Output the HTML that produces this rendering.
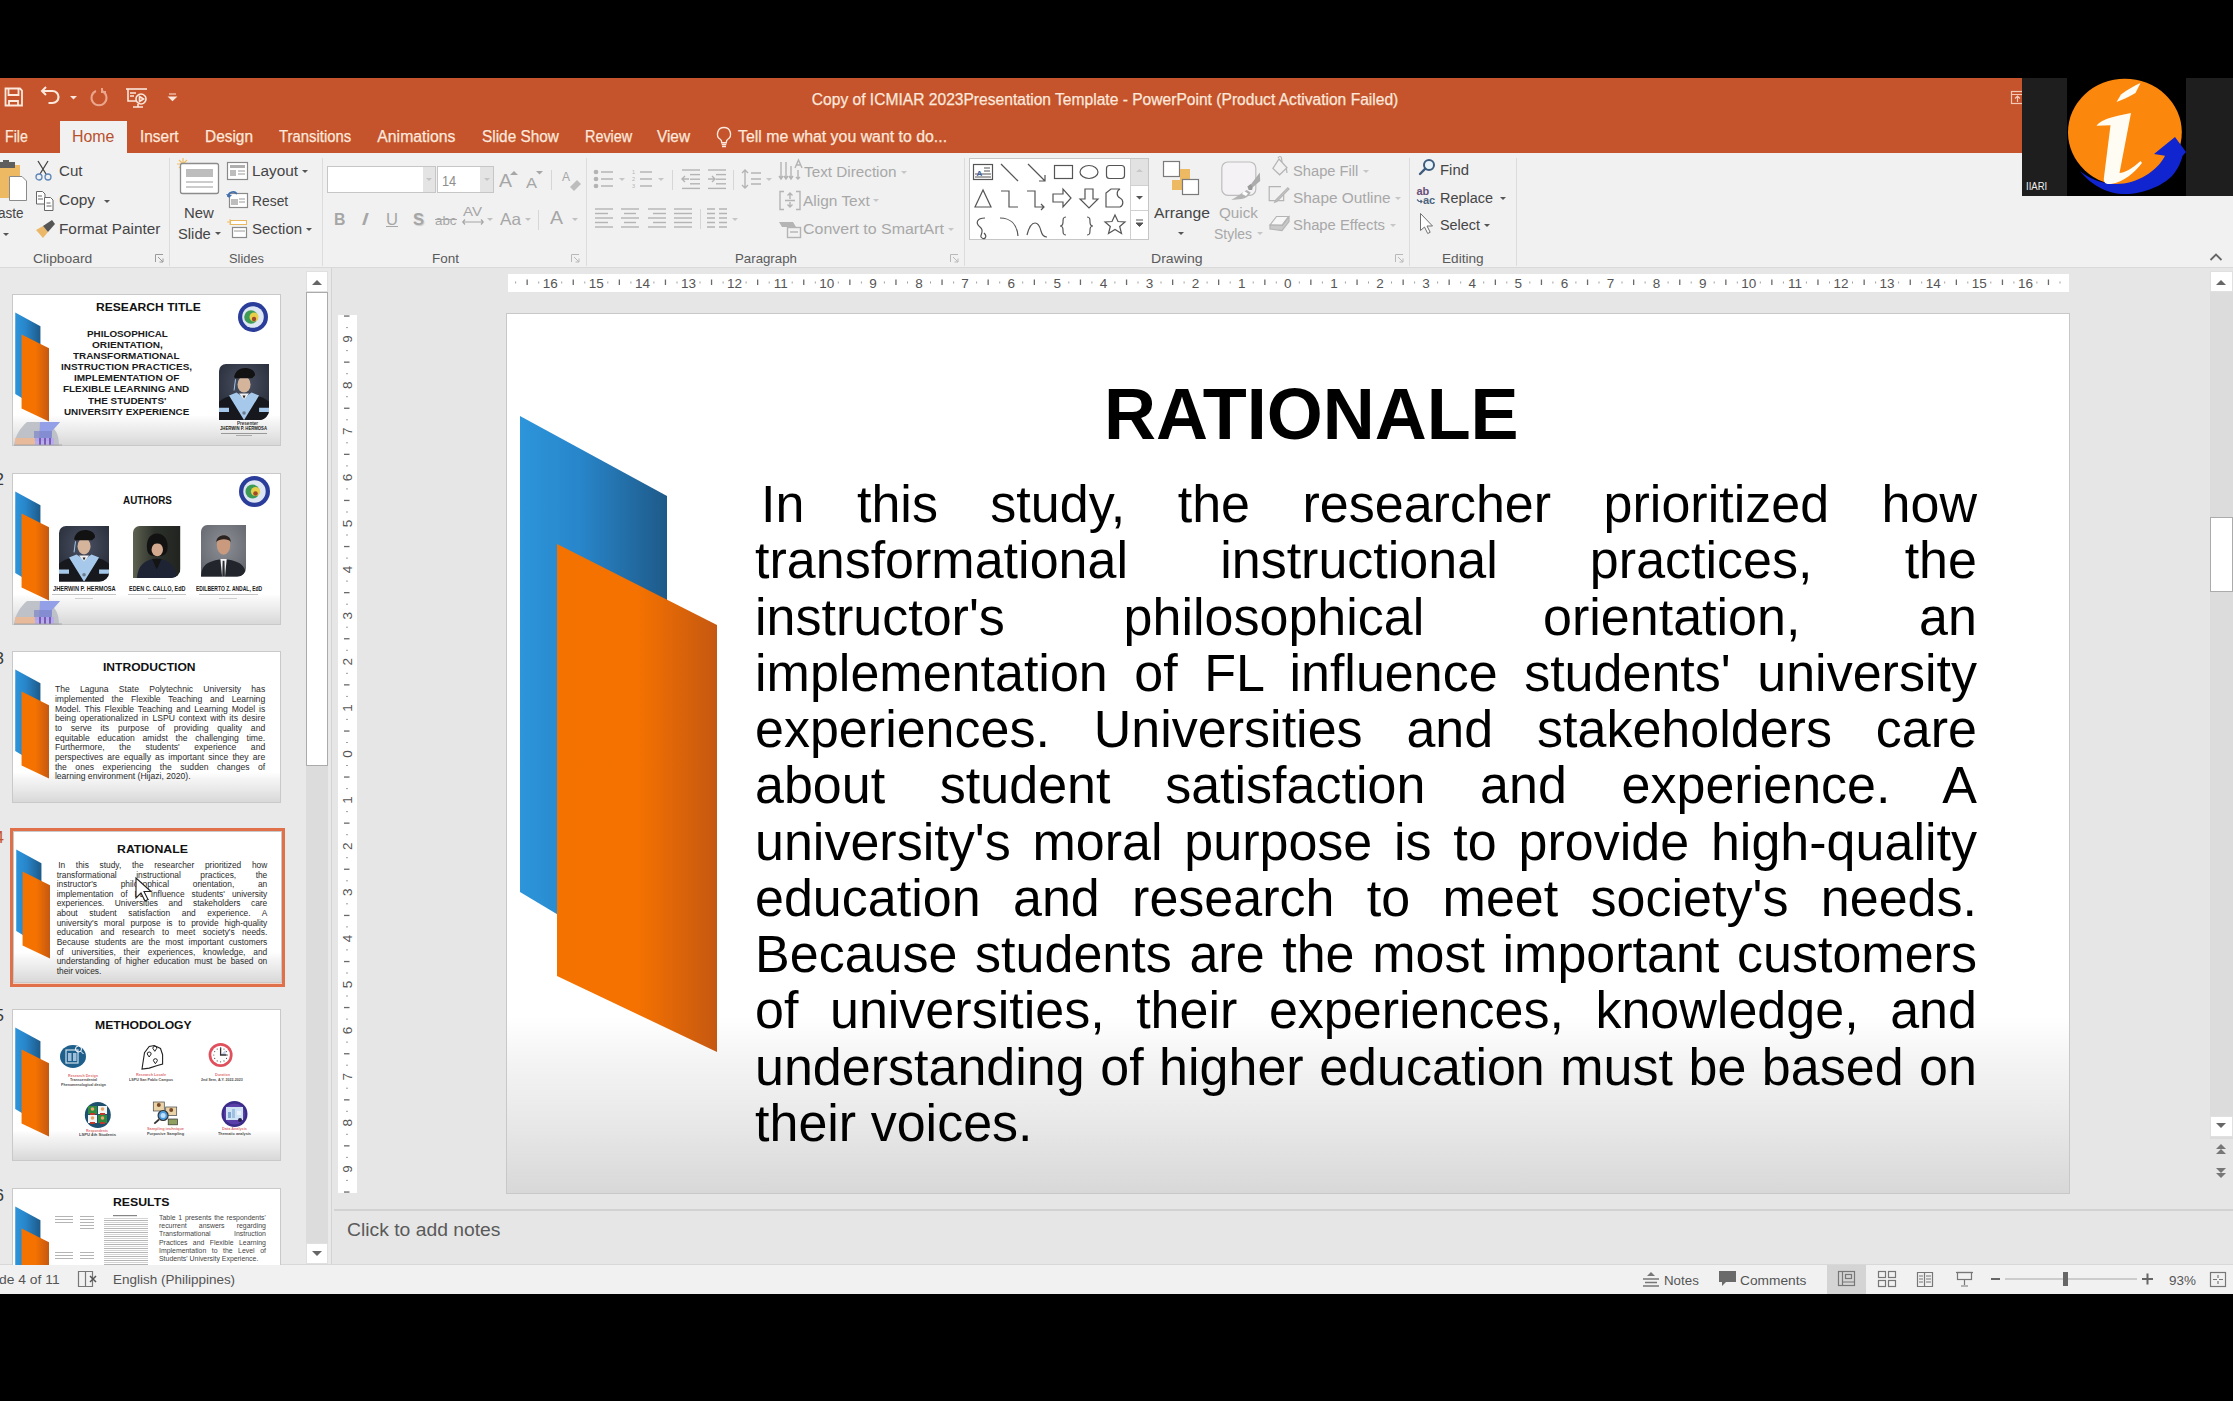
<!DOCTYPE html>
<html><head><meta charset="utf-8">
<style>
*{box-sizing:border-box;margin:0;padding:0}
html,body{width:2233px;height:1401px;overflow:hidden;background:#000}
body{position:relative;font-family:"Liberation Sans",sans-serif}
.a{position:absolute}
.t{position:absolute;white-space:nowrap;line-height:1;transform-origin:0 0}
svg{position:absolute;overflow:visible}
</style></head><body>
<div class="a" style="left:0;top:78px;width:2233px;height:75px;background:#C5532B"></div>
<div class="a" style="left:0;top:153px;width:2233px;height:115px;background:#F1F1F1"></div>
<div class="a" style="left:0;top:267px;width:2233px;height:1px;background:#D9D9D9"></div>
<div class="a" style="left:60px;top:121px;width:67px;height:32px;background:#F1F1F1"></div>
<div class="a" style="left:0;top:268px;width:2233px;height:997px;background:#E6E6E6"></div>
<div class="a" style="left:0;top:268px;width:331px;height:997px;background:#E9E9E9"></div>
<div class="a" style="left:331px;top:268px;width:1px;height:997px;background:#D4D4D4"></div>
<div class="a" style="left:0;top:1265px;width:2233px;height:29px;background:#F1F1F1"></div>
<div class="a" style="left:0;top:1264px;width:2233px;height:1px;background:#D8D8D8"></div>
<svg style="left:0;top:78px" width="200" height="40" viewBox="0 78 200 40">
<g fill="none" stroke="#FCE8DC" stroke-width="1.8">
<path d="M5.5 88.5h14.5l2 2v15h-16.5z"/><path d="M8.5 89v6h10v-6"/><path d="M9 106v-5h9v5"/>
<path d="M46 95l-4-4 4-4" stroke-width="2"/><path d="M42.5 91h10a6 6 0 0 1 0 12h-4" stroke-width="2.2"/>
</g>
<path d="M70 96h7l-3.5 3.5z" fill="#FCE8DC"/>
<g fill="none" stroke="#E9A68C" stroke-width="2"><path d="M102 91a7.5 7.5 0 1 1 -6 0"/><path d="M102 88v4h4"/></g>
<g fill="none" stroke="#FCE8DC" stroke-width="1.6"><path d="M126 89h21"/><path d="M128 89v12h8"/><path d="M130 93h6M130 96h4"/><circle cx="141" cy="99" r="5"/><path d="M139.5 96.5l4 2.5-4 2.5z"/><path d="M133 107h10M138 104v3"/></g>
<path d="M169 94h7M169 97h7l-3.5 3.5z" stroke="#FCE8DC" stroke-width="1.2" fill="#FCE8DC"/>
</svg>
<svg style="left:714px;top:125px" width="20" height="24" viewBox="0 0 20 24"><g fill="none" stroke="#FCE8DC" stroke-width="1.4"><path d="M10 2.5a6.5 6.5 0 0 0 -3.5 12c1 .8 1.2 2 1.2 3.3h4.6c0-1.3.2-2.5 1.2-3.3A6.5 6.5 0 0 0 10 2.5z"/><path d="M7.7 19.5h4.6M8 21.5h4"/></g></svg>
<svg style="left:2010px;top:90px" width="14" height="16" viewBox="0 0 14 16"><g fill="none" stroke="#F3C9B8" stroke-width="1.2"><rect x="1.5" y="1.5" width="12" height="12"/><path d="M1.5 4.5h12M7.5 12v-6M5 8.5l2.5-2.5 2.5 2.5"/></g></svg>
<div class="a" style="left:169px;top:158px;width:1px;height:108px;background:#DCDCDC"></div>
<div class="a" style="left:322px;top:158px;width:1px;height:108px;background:#DCDCDC"></div>
<div class="a" style="left:586px;top:158px;width:1px;height:108px;background:#DCDCDC"></div>
<div class="a" style="left:964px;top:158px;width:1px;height:108px;background:#DCDCDC"></div>
<div class="a" style="left:1409px;top:158px;width:1px;height:108px;background:#DCDCDC"></div>
<div class="a" style="left:1516px;top:158px;width:1px;height:108px;background:#DCDCDC"></div>
<svg style="left:155px;top:254px" width="9" height="9" viewBox="0 0 9 9"><g fill="none" stroke="#9A9A9A" stroke-width="1"><path d="M.5 8V.5H8"/><path d="M3 3l5 5M8 4.5V8H4.5"/></g></svg>
<svg style="left:571px;top:254px" width="9" height="9" viewBox="0 0 9 9"><g fill="none" stroke="#B8B8B8" stroke-width="1"><path d="M.5 8V.5H8"/><path d="M3 3l5 5M8 4.5V8H4.5"/></g></svg>
<svg style="left:950px;top:254px" width="9" height="9" viewBox="0 0 9 9"><g fill="none" stroke="#B8B8B8" stroke-width="1"><path d="M.5 8V.5H8"/><path d="M3 3l5 5M8 4.5V8H4.5"/></g></svg>
<svg style="left:1395px;top:254px" width="9" height="9" viewBox="0 0 9 9"><g fill="none" stroke="#B8B8B8" stroke-width="1"><path d="M.5 8V.5H8"/><path d="M3 3l5 5M8 4.5V8H4.5"/></g></svg>
<svg style="left:0;top:158px" width="40" height="82" viewBox="0 158 40 82">
<rect x="-2" y="165" width="22" height="33" fill="#EDBA63"/>
<rect x="-2" y="162" width="17" height="6" fill="#5E5E5E"/><rect x="3" y="160" width="6" height="4" fill="#5E5E5E"/>
<path d="M9.5 176.5h12.5l4.5 4.5v19.5h-17z" fill="#fff" stroke="#8A8A8A"/>
<path d="M3 233h6l-3 3z" fill="#555"/>
</svg>
<svg style="left:34px;top:160px" width="20" height="22" viewBox="0 0 20 22"><g fill="none" stroke-width="1.3"><path d="M4 1l8 13M14 1L6 14" stroke="#444"/><circle cx="5" cy="17" r="3" stroke="#5F86B8"/><circle cx="14" cy="17" r="3" stroke="#5F86B8"/></g></svg>
<svg style="left:35px;top:190px" width="20" height="22" viewBox="0 0 20 22"><g fill="#fff" stroke="#666" stroke-width="1"><path d="M1.5 1.5h6l2.5 2.5v10h-8.5z"/><path d="M9.5 7.5h6l2.5 2.5v10.5h-8.5z"/></g><g stroke="#666" stroke-width="1"><path d="M3 6h4M3 9h5M11.5 13h4M11.5 16h5"/></g></svg>
<svg style="left:104.0px;top:200.0px" width="6" height="5" viewBox="0 0 6 5"><path d="M0 0h6l-3.0 3.0z" fill="#555"/></svg>
<svg style="left:34px;top:219px" width="22" height="20" viewBox="0 0 22 20"><path d="M2 11l7-4 5 6-5 6z" fill="#EAB868"/><path d="M9 7l9-6 3 4-7 8z" fill="#555"/></svg>
<svg style="left:176px;top:157px" width="46" height="40" viewBox="0 0 46 40">
<g stroke="#F0C060" stroke-width="1.2"><path d="M7 1v12M1 7h12M3 3l8 8M11 3l-8 8"/></g>
<rect x="4.5" y="6.5" width="38" height="30" rx="2" fill="#fff" stroke="#8C8C8C" stroke-width="1.3"/>
<rect x="10" y="12" width="27" height="8" fill="#BDBDBD"/>
<path d="M10 25h27M10 30h27" stroke="#9A9A9A" stroke-width="1.2"/>
</svg>
<svg style="left:215.0px;top:232.0px" width="6" height="5" viewBox="0 0 6 5"><path d="M0 0h6l-3.0 3.0z" fill="#555"/></svg>
<svg style="left:226px;top:161px" width="24" height="80" viewBox="0 0 24 80">
<rect x="1.5" y="1.5" width="20" height="17" fill="#fff" stroke="#8A8A8A" stroke-width="1.2"/><rect x="4" y="4" width="15" height="3" fill="#AFAFAF"/><rect x="4" y="9" width="6" height="6" fill="#BDBDBD"/><path d="M12 10h7M12 13h7" stroke="#9A9A9A"/>
<rect x="3.5" y="32.5" width="18" height="14" fill="#fff" stroke="#8A8A8A" stroke-width="1.2"/><rect x="5" y="38" width="7" height="6" fill="#BDBDBD"/><path d="M13 38h6M13 41h6" stroke="#9A9A9A"/>
<path d="M2 36a5 5 0 0 1 9-3" fill="none" stroke="#3F6FB0" stroke-width="1.6"/><path d="M0 33l3 4 3-3z" fill="#3F6FB0"/>
<g stroke="#F0C060" stroke-width="1"><path d="M4 58v6M1 61h6"/></g>
<rect x="4.5" y="59.5" width="16" height="4" fill="#fff" stroke="#E8B860"/>
<rect x="6.5" y="66.5" width="14" height="10" fill="#fff" stroke="#8A8A8A" stroke-width="1.2"/><path d="M8 70h11" stroke="#9A9A9A"/>
</svg>
<svg style="left:302.0px;top:170.0px" width="6" height="5" viewBox="0 0 6 5"><path d="M0 0h6l-3.0 3.0z" fill="#555"/></svg>
<svg style="left:306.0px;top:228.0px" width="6" height="5" viewBox="0 0 6 5"><path d="M0 0h6l-3.0 3.0z" fill="#555"/></svg>
<div class="a" style="left:327px;top:166px;width:109px;height:27px;background:#fff;border:1px solid #C6C6C6"></div>
<div class="a" style="left:423px;top:167px;width:12px;height:25px;background:#E4E4E4"></div>
<div class="a" style="left:437px;top:166px;width:57px;height:27px;background:#fff;border:1px solid #C6C6C6"></div>
<div class="a" style="left:480px;top:167px;width:13px;height:25px;background:#E4E4E4"></div>
<svg style="left:426.0px;top:178.0px" width="6" height="5" viewBox="0 0 6 5"><path d="M0 0h6l-3.0 3.0z" fill="#C4C4C4"/></svg>
<svg style="left:484.0px;top:178.0px" width="6" height="5" viewBox="0 0 6 5"><path d="M0 0h6l-3.0 3.0z" fill="#C4C4C4"/></svg>
<svg style="left:510px;top:170px" width="8" height="5" viewBox="0 0 8 5"><path d="M0 5l4-4 4 4z" fill="#A6A6A6"/></svg>
<svg style="left:536px;top:171px" width="7" height="4" viewBox="0 0 7 4"><path d="M0 0h7l-3.5 3.5z" fill="#A6A6A6"/></svg>
<div class="a" style="left:551px;top:170px;width:1px;height:20px;background:#D6D6D6"></div>
<svg style="left:562px;top:170px" width="20" height="20" viewBox="0 0 20 20"><text x="0" y="11" font-size="12" fill="#A6A6A6" font-family="Liberation Sans">A</text><path d="M8 17l7-7 4 4-7 7z" fill="#BDBDBD"/></svg>
<div class="a" style="left:386px;top:226px;width:12px;height:1.3px;background:#A6A6A6"></div>
<div class="a" style="left:435px;top:219px;width:22px;height:1.2px;background:#A6A6A6"></div>
<svg style="left:462px;top:218px" width="22" height="8" viewBox="0 0 22 8"><path d="M1 4h20M3 1.5L.8 4 3 6.5M19 1.5l2.2 2.5L19 6.5" fill="none" stroke="#A6A6A6" stroke-width="1.2"/></svg>
<svg style="left:487.0px;top:218.0px" width="6" height="5" viewBox="0 0 6 5"><path d="M0 0h6l-3.0 3.0z" fill="#C0C0C0"/></svg>
<svg style="left:525.0px;top:218.0px" width="6" height="5" viewBox="0 0 6 5"><path d="M0 0h6l-3.0 3.0z" fill="#C0C0C0"/></svg>
<div class="a" style="left:538px;top:210px;width:1px;height:20px;background:#D6D6D6"></div>
<svg style="left:572.0px;top:218.0px" width="6" height="5" viewBox="0 0 6 5"><path d="M0 0h6l-3.0 3.0z" fill="#C0C0C0"/></svg>
<svg style="left:586px;top:156px" width="380" height="90" viewBox="586 156 380 90"><g fill="none" stroke="#B4B4B4" stroke-width="1.5"><circle cx="596" cy="172" r="1.6" fill="#B4B4B4"/><path d="M601 172h12"/><path d="M640 172h12"/><circle cx="596" cy="179" r="1.6" fill="#B4B4B4"/><path d="M601 179h12"/><path d="M640 179h12"/><circle cx="596" cy="186" r="1.6" fill="#B4B4B4"/><path d="M601 186h12"/><path d="M640 186h12"/></g><g fill="#B4B4B4" font-size="5.5" font-family="Liberation Sans"><text x="632" y="174">1</text><text x="632" y="181">2</text><text x="632" y="188">3</text></g><g fill="none" stroke="#B4B4B4" stroke-width="1.4"><path d="M682 170.0h18"/><path d="M708 170.0h18"/><path d="M690 174.6h10"/><path d="M716 174.6h10"/><path d="M690 179.2h10"/><path d="M716 179.2h10"/><path d="M690 183.8h10"/><path d="M716 183.8h10"/><path d="M682 188.4h18"/><path d="M708 188.4h18"/><path d="M689 179h-7m3-3l-3 3 3 3"/><path d="M708 179h7m-3-3l3 3-3 3"/><path d="M745 170v18M742 173l3-3 3 3M742 185l3 3 3-3"/><path d="M751 173h10M751 179h10M751 184h10"/><path d="M781 162v17M786 162v17M791 166v13M779 176l2 3 2-3M784 176l2 3 2-3M789 176l2 3 2-3"/><path d="M795 168l3.5-8 3.5 8M796.5 165h4"/><path d="M798 170v9M796 177l2 2 2-2"/><path d="M784 191.5h-4v18h4M796 191.5h4v18h-4"/><path d="M790 193v6M787.5 195.5l2.5-2.5 2.5 2.5M790 207v-5M787.5 204.5l2.5 2.5 2.5-2.5M785 200.5h10"/><path d="M779 222h14l3 5h-14z" fill="#B4B4B4" stroke="none"/><rect x="787.5" y="227.5" width="13" height="10" fill="#F1F1F1"/><path d="M790 232h8"/><path d="M595 209.0h18"/><path d="M595 213.5h13"/><path d="M595 218.0h18"/><path d="M595 222.5h13"/><path d="M595 227.0h18"/><path d="M621 209.0h18"/><path d="M624 213.5h12"/><path d="M621 218.0h18"/><path d="M624 222.5h12"/><path d="M621 227.0h18"/><path d="M648 209.0h18"/><path d="M653 213.5h13"/><path d="M648 218.0h18"/><path d="M653 222.5h13"/><path d="M648 227.0h18"/><path d="M674 209.0h18"/><path d="M674 213.5h18"/><path d="M674 218.0h18"/><path d="M674 222.5h18"/><path d="M674 227.0h18"/><path d="M707 209.0h8M719 209.0h8"/><path d="M707 213.5h8M719 213.5h8"/><path d="M707 218.0h8M719 218.0h8"/><path d="M707 222.5h8M719 222.5h8"/><path d="M707 227.0h8M719 227.0h8"/></g></svg>
<svg style="left:619.0px;top:178.0px" width="6" height="5" viewBox="0 0 6 5"><path d="M0 0h6l-3.0 3.0z" fill="#C6C6C6"/></svg>
<svg style="left:658.0px;top:178.0px" width="6" height="5" viewBox="0 0 6 5"><path d="M0 0h6l-3.0 3.0z" fill="#C6C6C6"/></svg>
<svg style="left:766.0px;top:178.0px" width="6" height="5" viewBox="0 0 6 5"><path d="M0 0h6l-3.0 3.0z" fill="#C6C6C6"/></svg>
<svg style="left:732.0px;top:218.0px" width="6" height="5" viewBox="0 0 6 5"><path d="M0 0h6l-3.0 3.0z" fill="#C6C6C6"/></svg>
<div class="a" style="left:672px;top:170px;width:1px;height:20px;background:#D6D6D6"></div>
<div class="a" style="left:733px;top:170px;width:1px;height:20px;background:#D6D6D6"></div>
<div class="a" style="left:700px;top:209px;width:1px;height:20px;background:#D6D6D6"></div>
<svg style="left:901.0px;top:171.0px" width="6" height="5" viewBox="0 0 6 5"><path d="M0 0h6l-3.0 3.0z" fill="#C6C6C6"/></svg>
<svg style="left:873.0px;top:199.0px" width="6" height="5" viewBox="0 0 6 5"><path d="M0 0h6l-3.0 3.0z" fill="#C6C6C6"/></svg>
<svg style="left:948.0px;top:228.0px" width="6" height="5" viewBox="0 0 6 5"><path d="M0 0h6l-3.0 3.0z" fill="#C6C6C6"/></svg>
<div class="a" style="left:969px;top:158px;width:180px;height:82px;background:#fff;border:1px solid #C6C6C6"></div>
<div class="a" style="left:1131px;top:159px;width:17px;height:26px;background:#E2E2E2"></div>
<div class="a" style="left:1131px;top:185px;width:17px;height:1px;background:#D0D0D0"></div><div class="a" style="left:1131px;top:210px;width:17px;height:1px;background:#D0D0D0"></div><div class="a" style="left:1130px;top:159px;width:1px;height:80px;background:#D0D0D0"></div>
<svg style="left:1131px;top:159px" width="17" height="80" viewBox="0 0 17 80"><path d="M5 13l3.5-3 3.5 3z" fill="#C8C8C8"/><path d="M5 37h7l-3.5 3.5z" fill="#555"/><path d="M5 61h7M5 64h7l-3.5 3.5z" stroke="#555" stroke-width="1" fill="#555"/></svg>
<svg style="left:969px;top:158px" width="162" height="82" viewBox="969 158 162 82"><g fill="none" stroke="#555" stroke-width="1.2">
<rect x="973.5" y="164.5" width="19" height="15"/><path d="M984 168h6M984 171h6M975 174h16M975 177h16"/>
<path d="M1001 164l17 17"/><path d="M1028 164l17 17M1039 181h6v-6"/>
<rect x="1054.5" y="165.5" width="18" height="13"/><ellipse cx="1089" cy="172" rx="9" ry="6.5"/><rect x="1106.5" y="165.5" width="18" height="13" rx="3"/>
<path d="M983 190l-8 17h16z"/><path d="M1001 191h8v16h9"/><path d="M1027 191h8v16h9M1041 204l3 3-3 3"/>
<path d="M1053 194h10v-5l8 9-8 9v-5h-10z"/><path d="M1085 189h8v10h5l-9 9-9-9h5z"/><path d="M1106 193l5-4h9a5 5 0 0 0 0 9 5 5 0 0 1 0 9h-14z"/>
<path d="M985 218c-8 0-10 5-5 9s0 7 1 10c3 4 7 0 3-4"/><path d="M1000 218c10 0 17 6 18 18"/><path d="M1027 235c2-8 5-12 8-12s5 4 6 8 3 6 6 6"/>
<path d="M1066 217c-3 0-3 2-3 5s-1 4-3 4c2 0 3 1 3 4s0 5 3 5"/><path d="M1087 217c3 0 3 2 3 5s1 4 3 4c-2 0-3 1-3 4s0 5-3 5"/>
<path d="M1115 215l3 6.5 7 .5-5.3 4.5 1.8 7-6.5-4-6.5 4 1.8-7-5.3-4.5 7-.5z"/>
</g><text x="976.5" y="176" font-size="8" font-weight="bold" fill="#3F5F9F" font-family="Liberation Sans">A</text></svg>
<svg style="left:1162px;top:160px" width="40" height="38" viewBox="0 0 40 38"><rect x="1.5" y="1.5" width="16" height="15" fill="#fff" stroke="#7A7A7A" stroke-width="1.2"/><rect x="18" y="9" width="10" height="11" fill="#EDBA63"/><rect x="10" y="20" width="10" height="10" fill="#EDBA63"/><rect x="20.5" y="19.5" width="16" height="15" fill="#fff" stroke="#7A7A7A" stroke-width="1.2"/></svg>
<svg style="left:1178.0px;top:232.0px" width="6" height="5" viewBox="0 0 6 5"><path d="M0 0h6l-3.0 3.0z" fill="#555"/></svg>
<svg style="left:1215px;top:155px" width="80" height="80" viewBox="1215 155 80 80">
<rect x="1221.8" y="162" width="34" height="33.3" rx="6" fill="#F4F2F4" stroke="#BDBDBD" stroke-width="1.2"/>
<path d="M1259.8 172.5l.4 8.4-7.4 6.3-2-2.6z" fill="#ACACAC"/><path d="M1247.4 186.6l3.3-2.6 2.2 2.8-.8 3.2-3.4 0z" fill="#9A9A9A"/>
<path d="M1246.7 190l4 2.6c-2 4-5 6-9 6.5l-10.4.9c5-3 9-6 15.4-10z" fill="#B4B4B4"/><path d="M1244 191l4 2.5-2 2.5-4-2z" fill="#fff"/>
</svg>
<svg style="left:1257.0px;top:232.0px" width="6" height="5" viewBox="0 0 6 5"><path d="M0 0h6l-3.0 3.0z" fill="#C6C6C6"/></svg>
<svg style="left:1265px;top:155px" width="30" height="80" viewBox="1265 155 30 80"><g fill="none" stroke="#B4B4B4" stroke-width="1.2">
<path d="M1272.9 168.4l6.1-9.4 8 8.8-7.4 7z"/><path d="M1278 158c1-2 3-2 3.5 0l.5 4"/><path d="M1286.4 168.5l.6 4.5"/>
<path d="M1281 186.6h-11.8v14.1h14.5v-6"/><path d="M1287.7 187.9l-12 12.3-.9 2 2-.8 12.2-12.3z" fill="#C8C8C8"/>
<path d="M1270 225l6.5-8.5h12l-6.5 8.5z" fill="#F6F6F6"/><path d="M1270 225v4l12 1.5 7-9v-4.5l-6.5 8.5z" fill="#C9C9C9"/>
</g></svg>
<svg style="left:1363.0px;top:170.0px" width="6" height="5" viewBox="0 0 6 5"><path d="M0 0h6l-3.0 3.0z" fill="#C6C6C6"/></svg>
<svg style="left:1395.0px;top:197.0px" width="6" height="5" viewBox="0 0 6 5"><path d="M0 0h6l-3.0 3.0z" fill="#C6C6C6"/></svg>
<svg style="left:1390.0px;top:224.0px" width="6" height="5" viewBox="0 0 6 5"><path d="M0 0h6l-3.0 3.0z" fill="#C6C6C6"/></svg>
<svg style="left:1416px;top:158px" width="24" height="80" viewBox="0 0 24 80"><g fill="none" stroke="#3E5C7E" stroke-width="2"><circle cx="13" cy="7" r="5" fill="#E8F4FA"/><path d="M9.3 10.7l-5.3 5.3" stroke-width="2.4" stroke-linecap="round"/></g>
<text x="0.5" y="37.3" font-size="11" font-weight="bold" fill="#6A4F78" font-family="Liberation Sans">ab</text><text x="7" y="46.3" font-size="11" font-weight="bold" fill="#4A6480" font-family="Liberation Sans">ac</text><path d="M1 41.5l2 2h3M4.5 42l1.5 1.5-1.5 1.5" fill="none" stroke="#4A6480" stroke-width="1.1"/>
<path d="M4.5 55.5v17l4-3.5 3.2 6.5 2.5-1.2-3.2-6.3h5.5z" fill="#fff" stroke="#707070" stroke-width="1"/></svg>
<svg style="left:1500.0px;top:197.0px" width="6" height="5" viewBox="0 0 6 5"><path d="M0 0h6l-3.0 3.0z" fill="#555"/></svg>
<svg style="left:1484.0px;top:224.0px" width="6" height="5" viewBox="0 0 6 5"><path d="M0 0h6l-3.0 3.0z" fill="#555"/></svg>
<svg style="left:2209px;top:252px" width="14" height="10" viewBox="0 0 14 10"><path d="M1.5 8l5.5-5.5 5.5 5.5" fill="none" stroke="#666" stroke-width="1.8"/></svg>
<div class="a" style="left:508px;top:274px;width:1561px;height:18px;background:#fff"></div>
<svg style="left:508px;top:274px" width="1561" height="18" viewBox="508 274 1561 18"><rect x="515.1" y="281.5" width="1" height="2" fill="#A0A0A0"/><rect x="526.5" y="279.5" width="1.3" height="5.5" fill="#6A6A6A"/><rect x="538.2" y="281.5" width="1" height="2" fill="#A0A0A0"/><text x="550.2" y="287.5" font-size="13.5" fill="#555" text-anchor="middle" font-family="Liberation Sans">16</text><rect x="561.2" y="281.5" width="1" height="2" fill="#A0A0A0"/><rect x="572.6" y="279.5" width="1.3" height="5.5" fill="#6A6A6A"/><rect x="584.3" y="281.5" width="1" height="2" fill="#A0A0A0"/><text x="596.3" y="287.5" font-size="13.5" fill="#555" text-anchor="middle" font-family="Liberation Sans">15</text><rect x="607.3" y="281.5" width="1" height="2" fill="#A0A0A0"/><rect x="618.7" y="279.5" width="1.3" height="5.5" fill="#6A6A6A"/><rect x="630.4" y="281.5" width="1" height="2" fill="#A0A0A0"/><text x="642.4" y="287.5" font-size="13.5" fill="#555" text-anchor="middle" font-family="Liberation Sans">14</text><rect x="653.4" y="281.5" width="1" height="2" fill="#A0A0A0"/><rect x="664.8" y="279.5" width="1.3" height="5.5" fill="#6A6A6A"/><rect x="676.5" y="281.5" width="1" height="2" fill="#A0A0A0"/><text x="688.5" y="287.5" font-size="13.5" fill="#555" text-anchor="middle" font-family="Liberation Sans">13</text><rect x="699.5" y="281.5" width="1" height="2" fill="#A0A0A0"/><rect x="710.9" y="279.5" width="1.3" height="5.5" fill="#6A6A6A"/><rect x="722.6" y="281.5" width="1" height="2" fill="#A0A0A0"/><text x="734.6" y="287.5" font-size="13.5" fill="#555" text-anchor="middle" font-family="Liberation Sans">12</text><rect x="745.6" y="281.5" width="1" height="2" fill="#A0A0A0"/><rect x="757.0" y="279.5" width="1.3" height="5.5" fill="#6A6A6A"/><rect x="768.7" y="281.5" width="1" height="2" fill="#A0A0A0"/><text x="780.7" y="287.5" font-size="13.5" fill="#555" text-anchor="middle" font-family="Liberation Sans">11</text><rect x="791.7" y="281.5" width="1" height="2" fill="#A0A0A0"/><rect x="803.1" y="279.5" width="1.3" height="5.5" fill="#6A6A6A"/><rect x="814.8" y="281.5" width="1" height="2" fill="#A0A0A0"/><text x="826.8" y="287.5" font-size="13.5" fill="#555" text-anchor="middle" font-family="Liberation Sans">10</text><rect x="837.8" y="281.5" width="1" height="2" fill="#A0A0A0"/><rect x="849.2" y="279.5" width="1.3" height="5.5" fill="#6A6A6A"/><rect x="860.9" y="281.5" width="1" height="2" fill="#A0A0A0"/><text x="872.9" y="287.5" font-size="13.5" fill="#555" text-anchor="middle" font-family="Liberation Sans">9</text><rect x="883.9" y="281.5" width="1" height="2" fill="#A0A0A0"/><rect x="895.3" y="279.5" width="1.3" height="5.5" fill="#6A6A6A"/><rect x="907.0" y="281.5" width="1" height="2" fill="#A0A0A0"/><text x="919.0" y="287.5" font-size="13.5" fill="#555" text-anchor="middle" font-family="Liberation Sans">8</text><rect x="930.0" y="281.5" width="1" height="2" fill="#A0A0A0"/><rect x="941.4" y="279.5" width="1.3" height="5.5" fill="#6A6A6A"/><rect x="953.1" y="281.5" width="1" height="2" fill="#A0A0A0"/><text x="965.1" y="287.5" font-size="13.5" fill="#555" text-anchor="middle" font-family="Liberation Sans">7</text><rect x="976.1" y="281.5" width="1" height="2" fill="#A0A0A0"/><rect x="987.5" y="279.5" width="1.3" height="5.5" fill="#6A6A6A"/><rect x="999.2" y="281.5" width="1" height="2" fill="#A0A0A0"/><text x="1011.2" y="287.5" font-size="13.5" fill="#555" text-anchor="middle" font-family="Liberation Sans">6</text><rect x="1022.2" y="281.5" width="1" height="2" fill="#A0A0A0"/><rect x="1033.7" y="279.5" width="1.3" height="5.5" fill="#6A6A6A"/><rect x="1045.3" y="281.5" width="1" height="2" fill="#A0A0A0"/><text x="1057.3" y="287.5" font-size="13.5" fill="#555" text-anchor="middle" font-family="Liberation Sans">5</text><rect x="1068.3" y="281.5" width="1" height="2" fill="#A0A0A0"/><rect x="1079.8" y="279.5" width="1.3" height="5.5" fill="#6A6A6A"/><rect x="1091.4" y="281.5" width="1" height="2" fill="#A0A0A0"/><text x="1103.4" y="287.5" font-size="13.5" fill="#555" text-anchor="middle" font-family="Liberation Sans">4</text><rect x="1114.4" y="281.5" width="1" height="2" fill="#A0A0A0"/><rect x="1125.9" y="279.5" width="1.3" height="5.5" fill="#6A6A6A"/><rect x="1137.5" y="281.5" width="1" height="2" fill="#A0A0A0"/><text x="1149.5" y="287.5" font-size="13.5" fill="#555" text-anchor="middle" font-family="Liberation Sans">3</text><rect x="1160.5" y="281.5" width="1" height="2" fill="#A0A0A0"/><rect x="1172.0" y="279.5" width="1.3" height="5.5" fill="#6A6A6A"/><rect x="1183.6" y="281.5" width="1" height="2" fill="#A0A0A0"/><text x="1195.6" y="287.5" font-size="13.5" fill="#555" text-anchor="middle" font-family="Liberation Sans">2</text><rect x="1206.6" y="281.5" width="1" height="2" fill="#A0A0A0"/><rect x="1218.0" y="279.5" width="1.3" height="5.5" fill="#6A6A6A"/><rect x="1229.7" y="281.5" width="1" height="2" fill="#A0A0A0"/><text x="1241.7" y="287.5" font-size="13.5" fill="#555" text-anchor="middle" font-family="Liberation Sans">1</text><rect x="1252.7" y="281.5" width="1" height="2" fill="#A0A0A0"/><rect x="1264.2" y="279.5" width="1.3" height="5.5" fill="#6A6A6A"/><rect x="1275.8" y="281.5" width="1" height="2" fill="#A0A0A0"/><text x="1287.8" y="287.5" font-size="13.5" fill="#555" text-anchor="middle" font-family="Liberation Sans">0</text><rect x="1298.8" y="281.5" width="1" height="2" fill="#A0A0A0"/><rect x="1310.2" y="279.5" width="1.3" height="5.5" fill="#6A6A6A"/><rect x="1321.9" y="281.5" width="1" height="2" fill="#A0A0A0"/><text x="1333.9" y="287.5" font-size="13.5" fill="#555" text-anchor="middle" font-family="Liberation Sans">1</text><rect x="1344.9" y="281.5" width="1" height="2" fill="#A0A0A0"/><rect x="1356.4" y="279.5" width="1.3" height="5.5" fill="#6A6A6A"/><rect x="1368.0" y="281.5" width="1" height="2" fill="#A0A0A0"/><text x="1380.0" y="287.5" font-size="13.5" fill="#555" text-anchor="middle" font-family="Liberation Sans">2</text><rect x="1391.0" y="281.5" width="1" height="2" fill="#A0A0A0"/><rect x="1402.5" y="279.5" width="1.3" height="5.5" fill="#6A6A6A"/><rect x="1414.1" y="281.5" width="1" height="2" fill="#A0A0A0"/><text x="1426.1" y="287.5" font-size="13.5" fill="#555" text-anchor="middle" font-family="Liberation Sans">3</text><rect x="1437.1" y="281.5" width="1" height="2" fill="#A0A0A0"/><rect x="1448.5" y="279.5" width="1.3" height="5.5" fill="#6A6A6A"/><rect x="1460.2" y="281.5" width="1" height="2" fill="#A0A0A0"/><text x="1472.2" y="287.5" font-size="13.5" fill="#555" text-anchor="middle" font-family="Liberation Sans">4</text><rect x="1483.2" y="281.5" width="1" height="2" fill="#A0A0A0"/><rect x="1494.7" y="279.5" width="1.3" height="5.5" fill="#6A6A6A"/><rect x="1506.3" y="281.5" width="1" height="2" fill="#A0A0A0"/><text x="1518.3" y="287.5" font-size="13.5" fill="#555" text-anchor="middle" font-family="Liberation Sans">5</text><rect x="1529.3" y="281.5" width="1" height="2" fill="#A0A0A0"/><rect x="1540.8" y="279.5" width="1.3" height="5.5" fill="#6A6A6A"/><rect x="1552.4" y="281.5" width="1" height="2" fill="#A0A0A0"/><text x="1564.4" y="287.5" font-size="13.5" fill="#555" text-anchor="middle" font-family="Liberation Sans">6</text><rect x="1575.4" y="281.5" width="1" height="2" fill="#A0A0A0"/><rect x="1586.9" y="279.5" width="1.3" height="5.5" fill="#6A6A6A"/><rect x="1598.5" y="281.5" width="1" height="2" fill="#A0A0A0"/><text x="1610.5" y="287.5" font-size="13.5" fill="#555" text-anchor="middle" font-family="Liberation Sans">7</text><rect x="1621.5" y="281.5" width="1" height="2" fill="#A0A0A0"/><rect x="1633.0" y="279.5" width="1.3" height="5.5" fill="#6A6A6A"/><rect x="1644.6" y="281.5" width="1" height="2" fill="#A0A0A0"/><text x="1656.6" y="287.5" font-size="13.5" fill="#555" text-anchor="middle" font-family="Liberation Sans">8</text><rect x="1667.6" y="281.5" width="1" height="2" fill="#A0A0A0"/><rect x="1679.1" y="279.5" width="1.3" height="5.5" fill="#6A6A6A"/><rect x="1690.7" y="281.5" width="1" height="2" fill="#A0A0A0"/><text x="1702.7" y="287.5" font-size="13.5" fill="#555" text-anchor="middle" font-family="Liberation Sans">9</text><rect x="1713.7" y="281.5" width="1" height="2" fill="#A0A0A0"/><rect x="1725.2" y="279.5" width="1.3" height="5.5" fill="#6A6A6A"/><rect x="1736.8" y="281.5" width="1" height="2" fill="#A0A0A0"/><text x="1748.8" y="287.5" font-size="13.5" fill="#555" text-anchor="middle" font-family="Liberation Sans">10</text><rect x="1759.8" y="281.5" width="1" height="2" fill="#A0A0A0"/><rect x="1771.2" y="279.5" width="1.3" height="5.5" fill="#6A6A6A"/><rect x="1782.9" y="281.5" width="1" height="2" fill="#A0A0A0"/><text x="1794.9" y="287.5" font-size="13.5" fill="#555" text-anchor="middle" font-family="Liberation Sans">11</text><rect x="1805.9" y="281.5" width="1" height="2" fill="#A0A0A0"/><rect x="1817.3" y="279.5" width="1.3" height="5.5" fill="#6A6A6A"/><rect x="1829.0" y="281.5" width="1" height="2" fill="#A0A0A0"/><text x="1841.0" y="287.5" font-size="13.5" fill="#555" text-anchor="middle" font-family="Liberation Sans">12</text><rect x="1852.0" y="281.5" width="1" height="2" fill="#A0A0A0"/><rect x="1863.5" y="279.5" width="1.3" height="5.5" fill="#6A6A6A"/><rect x="1875.1" y="281.5" width="1" height="2" fill="#A0A0A0"/><text x="1887.1" y="287.5" font-size="13.5" fill="#555" text-anchor="middle" font-family="Liberation Sans">13</text><rect x="1898.1" y="281.5" width="1" height="2" fill="#A0A0A0"/><rect x="1909.6" y="279.5" width="1.3" height="5.5" fill="#6A6A6A"/><rect x="1921.2" y="281.5" width="1" height="2" fill="#A0A0A0"/><text x="1933.2" y="287.5" font-size="13.5" fill="#555" text-anchor="middle" font-family="Liberation Sans">14</text><rect x="1944.2" y="281.5" width="1" height="2" fill="#A0A0A0"/><rect x="1955.7" y="279.5" width="1.3" height="5.5" fill="#6A6A6A"/><rect x="1967.3" y="281.5" width="1" height="2" fill="#A0A0A0"/><text x="1979.3" y="287.5" font-size="13.5" fill="#555" text-anchor="middle" font-family="Liberation Sans">15</text><rect x="1990.3" y="281.5" width="1" height="2" fill="#A0A0A0"/><rect x="2001.8" y="279.5" width="1.3" height="5.5" fill="#6A6A6A"/><rect x="2013.4" y="281.5" width="1" height="2" fill="#A0A0A0"/><text x="2025.4" y="287.5" font-size="13.5" fill="#555" text-anchor="middle" font-family="Liberation Sans">16</text><rect x="2036.4" y="281.5" width="1" height="2" fill="#A0A0A0"/><rect x="2047.8" y="279.5" width="1.3" height="5.5" fill="#6A6A6A"/><rect x="2059.5" y="281.5" width="1" height="2" fill="#A0A0A0"/></svg>
<div class="a" style="left:338px;top:315px;width:19px;height:878px;background:#fff"></div>
<svg style="left:338px;top:315px" width="19" height="878" viewBox="338 315 19 878"><rect x="344" y="315.4" width="5.5" height="1.3" fill="#6A6A6A"/><rect x="346" y="327.1" width="2" height="1" fill="#A0A0A0"/><text x="0" y="0" font-size="13.5" fill="#555" text-anchor="middle" font-family="Liberation Sans" transform="translate(351.5 339.1) rotate(-90)">9</text><rect x="346" y="350.1" width="2" height="1" fill="#A0A0A0"/><rect x="344" y="361.5" width="5.5" height="1.3" fill="#6A6A6A"/><rect x="346" y="373.2" width="2" height="1" fill="#A0A0A0"/><text x="0" y="0" font-size="13.5" fill="#555" text-anchor="middle" font-family="Liberation Sans" transform="translate(351.5 385.2) rotate(-90)">8</text><rect x="346" y="396.2" width="2" height="1" fill="#A0A0A0"/><rect x="344" y="407.6" width="5.5" height="1.3" fill="#6A6A6A"/><rect x="346" y="419.3" width="2" height="1" fill="#A0A0A0"/><text x="0" y="0" font-size="13.5" fill="#555" text-anchor="middle" font-family="Liberation Sans" transform="translate(351.5 431.3) rotate(-90)">7</text><rect x="346" y="442.3" width="2" height="1" fill="#A0A0A0"/><rect x="344" y="453.7" width="5.5" height="1.3" fill="#6A6A6A"/><rect x="346" y="465.4" width="2" height="1" fill="#A0A0A0"/><text x="0" y="0" font-size="13.5" fill="#555" text-anchor="middle" font-family="Liberation Sans" transform="translate(351.5 477.4) rotate(-90)">6</text><rect x="346" y="488.4" width="2" height="1" fill="#A0A0A0"/><rect x="344" y="499.8" width="5.5" height="1.3" fill="#6A6A6A"/><rect x="346" y="511.5" width="2" height="1" fill="#A0A0A0"/><text x="0" y="0" font-size="13.5" fill="#555" text-anchor="middle" font-family="Liberation Sans" transform="translate(351.5 523.5) rotate(-90)">5</text><rect x="346" y="534.5" width="2" height="1" fill="#A0A0A0"/><rect x="344" y="545.9" width="5.5" height="1.3" fill="#6A6A6A"/><rect x="346" y="557.6" width="2" height="1" fill="#A0A0A0"/><text x="0" y="0" font-size="13.5" fill="#555" text-anchor="middle" font-family="Liberation Sans" transform="translate(351.5 569.6) rotate(-90)">4</text><rect x="346" y="580.6" width="2" height="1" fill="#A0A0A0"/><rect x="344" y="592.0" width="5.5" height="1.3" fill="#6A6A6A"/><rect x="346" y="603.7" width="2" height="1" fill="#A0A0A0"/><text x="0" y="0" font-size="13.5" fill="#555" text-anchor="middle" font-family="Liberation Sans" transform="translate(351.5 615.7) rotate(-90)">3</text><rect x="346" y="626.7" width="2" height="1" fill="#A0A0A0"/><rect x="344" y="638.1" width="5.5" height="1.3" fill="#6A6A6A"/><rect x="346" y="649.8" width="2" height="1" fill="#A0A0A0"/><text x="0" y="0" font-size="13.5" fill="#555" text-anchor="middle" font-family="Liberation Sans" transform="translate(351.5 661.8) rotate(-90)">2</text><rect x="346" y="672.8" width="2" height="1" fill="#A0A0A0"/><rect x="344" y="684.2" width="5.5" height="1.3" fill="#6A6A6A"/><rect x="346" y="695.9" width="2" height="1" fill="#A0A0A0"/><text x="0" y="0" font-size="13.5" fill="#555" text-anchor="middle" font-family="Liberation Sans" transform="translate(351.5 707.9) rotate(-90)">1</text><rect x="346" y="718.9" width="2" height="1" fill="#A0A0A0"/><rect x="344" y="730.4" width="5.5" height="1.3" fill="#6A6A6A"/><rect x="346" y="742.0" width="2" height="1" fill="#A0A0A0"/><text x="0" y="0" font-size="13.5" fill="#555" text-anchor="middle" font-family="Liberation Sans" transform="translate(351.5 754.0) rotate(-90)">0</text><rect x="346" y="765.0" width="2" height="1" fill="#A0A0A0"/><rect x="344" y="776.4" width="5.5" height="1.3" fill="#6A6A6A"/><rect x="346" y="788.1" width="2" height="1" fill="#A0A0A0"/><text x="0" y="0" font-size="13.5" fill="#555" text-anchor="middle" font-family="Liberation Sans" transform="translate(351.5 800.1) rotate(-90)">1</text><rect x="346" y="811.1" width="2" height="1" fill="#A0A0A0"/><rect x="344" y="822.5" width="5.5" height="1.3" fill="#6A6A6A"/><rect x="346" y="834.2" width="2" height="1" fill="#A0A0A0"/><text x="0" y="0" font-size="13.5" fill="#555" text-anchor="middle" font-family="Liberation Sans" transform="translate(351.5 846.2) rotate(-90)">2</text><rect x="346" y="857.2" width="2" height="1" fill="#A0A0A0"/><rect x="344" y="868.6" width="5.5" height="1.3" fill="#6A6A6A"/><rect x="346" y="880.3" width="2" height="1" fill="#A0A0A0"/><text x="0" y="0" font-size="13.5" fill="#555" text-anchor="middle" font-family="Liberation Sans" transform="translate(351.5 892.3) rotate(-90)">3</text><rect x="346" y="903.3" width="2" height="1" fill="#A0A0A0"/><rect x="344" y="914.8" width="5.5" height="1.3" fill="#6A6A6A"/><rect x="346" y="926.4" width="2" height="1" fill="#A0A0A0"/><text x="0" y="0" font-size="13.5" fill="#555" text-anchor="middle" font-family="Liberation Sans" transform="translate(351.5 938.4) rotate(-90)">4</text><rect x="346" y="949.4" width="2" height="1" fill="#A0A0A0"/><rect x="344" y="960.9" width="5.5" height="1.3" fill="#6A6A6A"/><rect x="346" y="972.5" width="2" height="1" fill="#A0A0A0"/><text x="0" y="0" font-size="13.5" fill="#555" text-anchor="middle" font-family="Liberation Sans" transform="translate(351.5 984.5) rotate(-90)">5</text><rect x="346" y="995.5" width="2" height="1" fill="#A0A0A0"/><rect x="344" y="1006.9" width="5.5" height="1.3" fill="#6A6A6A"/><rect x="346" y="1018.6" width="2" height="1" fill="#A0A0A0"/><text x="0" y="0" font-size="13.5" fill="#555" text-anchor="middle" font-family="Liberation Sans" transform="translate(351.5 1030.6) rotate(-90)">6</text><rect x="346" y="1041.6" width="2" height="1" fill="#A0A0A0"/><rect x="344" y="1053.1" width="5.5" height="1.3" fill="#6A6A6A"/><rect x="346" y="1064.7" width="2" height="1" fill="#A0A0A0"/><text x="0" y="0" font-size="13.5" fill="#555" text-anchor="middle" font-family="Liberation Sans" transform="translate(351.5 1076.7) rotate(-90)">7</text><rect x="346" y="1087.7" width="2" height="1" fill="#A0A0A0"/><rect x="344" y="1099.2" width="5.5" height="1.3" fill="#6A6A6A"/><rect x="346" y="1110.8" width="2" height="1" fill="#A0A0A0"/><text x="0" y="0" font-size="13.5" fill="#555" text-anchor="middle" font-family="Liberation Sans" transform="translate(351.5 1122.8) rotate(-90)">8</text><rect x="346" y="1133.8" width="2" height="1" fill="#A0A0A0"/><rect x="344" y="1145.2" width="5.5" height="1.3" fill="#6A6A6A"/><rect x="346" y="1156.9" width="2" height="1" fill="#A0A0A0"/><text x="0" y="0" font-size="13.5" fill="#555" text-anchor="middle" font-family="Liberation Sans" transform="translate(351.5 1168.9) rotate(-90)">9</text><rect x="346" y="1179.9" width="2" height="1" fill="#A0A0A0"/><rect x="344" y="1191.4" width="5.5" height="1.3" fill="#6A6A6A"/></svg>
<div class="a" style="left:506px;top:313px;width:1564px;height:881px;border:1px solid #C8C8C8;background:linear-gradient(to bottom,#fff 0%,#fff 80%,#F4F4F4 85%,#EAEAEA 91%,#DEDEDE 97%,#D8D8D8 100%);overflow:hidden">
<svg style="left:0;top:0" width="1562" height="879" viewBox="507 314 1562 879"><defs>
<linearGradient id="gbm" x1="0" x2="1" y1="0" y2="0"><stop offset="0" stop-color="#2D95DA"/><stop offset="0.4" stop-color="#2886CB"/><stop offset="1" stop-color="#1E5A89"/></linearGradient>
<linearGradient id="gom" x1="0" x2="1" y1="0" y2="0"><stop offset="0" stop-color="#F47200"/><stop offset="0.5" stop-color="#F57200"/><stop offset="1" stop-color="#C55811"/></linearGradient>
</defs>
<polygon points="520,416 667,496 667,980 520,892" fill="url(#gbm)"/>
<polygon points="557,544 717,625 717,1052 557,976" fill="url(#gom)"/></svg>
<div class="t" style="left:597px;top:64px;font-weight:bold;font-size:72px;color:#000">RATIONALE</div>
<div class="a" style="left:248px;top:163px;width:1198px;font-size:51px;line-height:56.27px;color:#000;transform-origin:0 0;transform:scaleX(1.02)">
<div style="white-space:nowrap;text-align:justify;text-align-last:justify;padding-left:6px;">In this study, the researcher prioritized how</div>
<div style="white-space:nowrap;text-align:justify;text-align-last:justify;">transformational instructional practices, the</div>
<div style="white-space:nowrap;text-align:justify;text-align-last:justify;">instructor's philosophical orientation, an</div>
<div style="white-space:nowrap;text-align:justify;text-align-last:justify;">implementation of FL influence students' university</div>
<div style="white-space:nowrap;text-align:justify;text-align-last:justify;">experiences. Universities and stakeholders care</div>
<div style="white-space:nowrap;text-align:justify;text-align-last:justify;">about student satisfaction and experience. A</div>
<div style="white-space:nowrap;text-align:justify;text-align-last:justify;">university's moral purpose is to provide high-quality</div>
<div style="white-space:nowrap;text-align:justify;text-align-last:justify;">education and research to meet society's needs.</div>
<div style="white-space:nowrap;text-align:justify;text-align-last:justify;">Because students are the most important customers</div>
<div style="white-space:nowrap;text-align:justify;text-align-last:justify;">of universities, their experiences, knowledge, and</div>
<div style="white-space:nowrap;text-align:justify;text-align-last:justify;">understanding of higher education must be based on</div>
<div style="white-space:nowrap;text-align:left;text-align-last:left;">their voices.</div>
</div></div>
<div class="a" style="left:306px;top:271px;width:22px;height:993px;background:#DCDCDC"></div>
<div class="a" style="left:306px;top:271px;width:22px;height:21px;background:#fff;border:1px solid #E0E0E0"></div>
<svg style="left:310px;top:278px" width="14" height="8" viewBox="0 0 14 8"><path d="M2 7l5-5 5 5z" fill="#666"/></svg>
<div class="a" style="left:306px;top:292px;width:22px;height:474px;background:#fff;border:1px solid #ABABAB"></div>
<div class="a" style="left:306px;top:1243px;width:22px;height:21px;background:#fff;border:1px solid #E0E0E0"></div>
<svg style="left:310px;top:1250px" width="14" height="8" viewBox="0 0 14 8"><path d="M2 1h10l-5 5z" fill="#666"/></svg>
<div class="a" style="left:2210px;top:271px;width:23px;height:868px;background:#DCDCDC"></div>
<div class="a" style="left:2210px;top:271px;width:23px;height:21px;background:#fff;border:1px solid #E0E0E0"></div>
<svg style="left:2214px;top:278px" width="14" height="8" viewBox="0 0 14 8"><path d="M2 7l5-5 5 5z" fill="#666"/></svg>
<div class="a" style="left:2210px;top:517px;width:23px;height:75px;background:#fff;border:1px solid #ABABAB"></div>
<div class="a" style="left:2210px;top:1116px;width:23px;height:21px;background:#fff;border:1px solid #E0E0E0"></div>
<svg style="left:2214px;top:1122px" width="14" height="8" viewBox="0 0 14 8"><path d="M2 1h10l-5 5z" fill="#666"/></svg>
<svg style="left:2213px;top:1142px" width="16" height="38" viewBox="0 0 16 38"><g fill="#777"><path d="M3 7l5-5 5 5z"/><path d="M3 12l5-5 5 5z"/><path d="M3 26h10l-5 5z"/><path d="M3 31h10l-5 5z"/></g></svg>
<div class="a" style="left:334px;top:1209px;width:1899px;height:2px;background:#D2D2D2"></div>
<svg style="left:77px;top:1270px" width="22" height="18" viewBox="0 0 22 18"><g fill="none" stroke="#777" stroke-width="1.2"><path d="M1.5 1.5h7v15h-7zM8.5 1.5h7v15h-7"/><path d="M13 6l6 6M19 6l-6 6" stroke="#555" stroke-width="1.5"/></g></svg>
<svg style="left:1642px;top:1270px" width="18" height="18" viewBox="0 0 18 18"><g stroke="#777" stroke-width="1.3"><path d="M1 9h16M3 12.5h12M1 16h16"/></g><path d="M5 6l4-4 4 4z" fill="#777"/></svg>
<svg style="left:1718px;top:1270px" width="20" height="18" viewBox="0 0 20 18"><path d="M1 1h17v11h-10l-4 4v-4h-3z" fill="#6A6A6A"/></svg>
<div class="a" style="left:1827px;top:1265px;width:39px;height:29px;background:#D4D4D4"></div>
<svg style="left:1836px;top:1269px" width="400" height="22" viewBox="1836 1269 400 22"><g fill="none" stroke="#777" stroke-width="1.2">
<rect x="1838.5" y="1271.5" width="16" height="14"/><path d="M1842.5 1272v13M1842.5 1282h12"/><rect x="1845.5" y="1274.5" width="6" height="4"/>
<rect x="1878.5" y="1271.5" width="7" height="6"/><rect x="1888.5" y="1271.5" width="7" height="6"/><rect x="1878.5" y="1280.5" width="7" height="6"/><rect x="1888.5" y="1280.5" width="7" height="6"/>
<path d="M1917.5 1272.5h7v14h-7zM1924.5 1272.5h8v14h-8z"/><path d="M1919 1276h4M1919 1279h4M1919 1282h4M1926 1276h5M1926 1279h5M1926 1282h5"/>
<path d="M1956 1272.5h17"/><rect x="1957.5" y="1272.5" width="14" height="7"/><path d="M1964.5 1280v5M1961 1286h7"/>
</g>
<rect x="1991" y="1278" width="9" height="2" fill="#666"/>
<rect x="2005" y="1278.5" width="132" height="1" fill="#A8A8A8"/><rect x="2066" y="1273" width="1" height="11" fill="#999"/>
<rect x="2063" y="1272" width="5" height="14" fill="#666"/>
<rect x="2142" y="1278" width="11" height="2" fill="#666"/><rect x="2146.5" y="1273.5" width="2" height="11" fill="#666"/>
<g fill="none" stroke="#777" stroke-width="1.2"><rect x="2210.5" y="1272.5" width="15" height="14"/><path d="M2213 1279.5h4M2219 1279.5h4M2218 1275v3M2218 1281v3"/></g>
</svg>
<div class="a" style="left:12px;top:294px;width:269px;height:152px;border:1px solid #C9C9C9;background:linear-gradient(to bottom,#fff 0%,#fff 80%,#F4F4F4 85%,#EAEAEA 91%,#DEDEDE 97%,#D8D8D8 100%);overflow:hidden">
<svg style="left:0;top:0" width="268" height="152" viewBox="507 314 1563.0 886.5" preserveAspectRatio="none"><defs>
<linearGradient id="gbt1" x1="0" x2="1" y1="0" y2="0"><stop offset="0" stop-color="#2D95DA"/><stop offset="0.4" stop-color="#2886CB"/><stop offset="1" stop-color="#1E5A89"/></linearGradient>
<linearGradient id="got1" x1="0" x2="1" y1="0" y2="0"><stop offset="0" stop-color="#F47200"/><stop offset="0.5" stop-color="#F57200"/><stop offset="1" stop-color="#C55811"/></linearGradient>
</defs>
<polygon points="520,416 667,496 667,980 520,892" fill="url(#gbt1)"/>
<polygon points="557,544 717,625 717,1052 557,976" fill="url(#got1)"/></svg>
</div>
<svg style="left:238.3px;top:302.0px" width="30" height="30" viewBox="238.3 302.0 30 30"><circle cx="253.3" cy="317.0" r="15.0" fill="#2B3D9A"/><circle cx="253.3" cy="317.0" r="10.8" fill="#DDE6F2"/><circle cx="251.3" cy="317.0" r="6.8" fill="#3E9A57"/><circle cx="254.3" cy="317.0" r="4.5" fill="#E9D04A"/><circle cx="254.3" cy="319.0" r="2.2" fill="#9E4A2A"/></svg>
<svg style="left:218.8px;top:363.7px" width="50.1" height="56.1" viewBox="0 0 100 110" preserveAspectRatio="none"><defs><clipPath id="pc1"><path d="M14 0h86v90a20 20 0 0 1-20 20H0V14A14 14 0 0 1 14 0z"/></clipPath><radialGradient id="pg1" cx="0.5" cy="0.35" r="0.7"><stop offset="0" stop-color="#4A5163"/><stop offset="1" stop-color="#262A36"/></radialGradient></defs><g clip-path="url(#pc1)"><rect width="100" height="110" fill="url(#pg1)"/><path d="M-5 80c10-14 30-20 55-20s45 6 55 20v35H-5z" fill="#16181E"/><path d="M20 62l30 48 30-48-15-6-15 10-15-10z" fill="#A6C8EA"/><path d="M40 58h20l-10 12z" fill="#F0F0F0"/><path d="M47 62h6l-3 6z" fill="#222"/><path d="M-2 86h22v8H-2zM80 86h22v8H80z" fill="#A6C8EA"/><circle cx="50" cy="96" r="3.5" fill="#6A7A8A"/><ellipse cx="50" cy="40" rx="13" ry="16" fill="#D5B49C"/><path d="M30 26c2-12 12-18 22-18s20 5 20 14l-6 6H34z" fill="#121212"/><path d="M33 30l-3 22" stroke="#9FC4E6" stroke-width="2"/></g></svg>
<div class="a" style="left:221px;top:432.5px;width:46px;height:1px;background:#999"></div><div class="a" style="left:236px;top:435px;width:16px;height:1px;background:#aaa"></div>
<svg style="left:14px;top:422px" width="50" height="24" viewBox="0 0 50 24"><path d="M13 0h33l-6 7c3 3 5 8 5 17H0c1-10 6-18 13-24z" fill="#B9BEC4" opacity="0.9"/><path d="M26 0h20l-8 9-1 10H25z" fill="#8E9BEA" opacity="0.9"/><path d="M20 9h18v10H20z" fill="#7D86C8" opacity="0.7"/><rect x="1" y="16" width="20" height="7" fill="#F0B894" opacity="0.85"/><rect x="21" y="16" width="19" height="7" fill="#B8A8F0" opacity="0.85"/><path d="M26 16v7M31 16v7M36 16v7" stroke="#6A4AA8" stroke-width="1.6"/><path d="M0 23h48" stroke="#A0A0A0" stroke-width="0.8"/></svg>
<div class="a" style="left:12px;top:473px;width:269px;height:152px;border:1px solid #C9C9C9;background:linear-gradient(to bottom,#fff 0%,#fff 80%,#F4F4F4 85%,#EAEAEA 91%,#DEDEDE 97%,#D8D8D8 100%);overflow:hidden">
<svg style="left:0;top:0" width="268" height="152" viewBox="507 314 1563.0 886.5" preserveAspectRatio="none"><defs>
<linearGradient id="gbt2" x1="0" x2="1" y1="0" y2="0"><stop offset="0" stop-color="#2D95DA"/><stop offset="0.4" stop-color="#2886CB"/><stop offset="1" stop-color="#1E5A89"/></linearGradient>
<linearGradient id="got2" x1="0" x2="1" y1="0" y2="0"><stop offset="0" stop-color="#F47200"/><stop offset="0.5" stop-color="#F57200"/><stop offset="1" stop-color="#C55811"/></linearGradient>
</defs>
<polygon points="520,416 667,496 667,980 520,892" fill="url(#gbt2)"/>
<polygon points="557,544 717,625 717,1052 557,976" fill="url(#got2)"/></svg>
</div>
<svg style="left:239.0px;top:475.7px" width="31" height="31" viewBox="239.0 475.7 31 31"><circle cx="254.5" cy="491.2" r="15.5" fill="#2B3D9A"/><circle cx="254.5" cy="491.2" r="11.2" fill="#DDE6F2"/><circle cx="252.5" cy="491.2" r="7.0" fill="#3E9A57"/><circle cx="255.5" cy="491.2" r="4.6" fill="#E9D04A"/><circle cx="255.5" cy="493.2" r="2.3" fill="#9E4A2A"/></svg>
<svg style="left:58.9px;top:525.7px" width="50.1" height="55.8" viewBox="0 0 100 110" preserveAspectRatio="none"><defs><clipPath id="pc2"><path d="M14 0h86v90a20 20 0 0 1-20 20H0V14A14 14 0 0 1 14 0z"/></clipPath><radialGradient id="pg2" cx="0.5" cy="0.35" r="0.7"><stop offset="0" stop-color="#4A5163"/><stop offset="1" stop-color="#262A36"/></radialGradient></defs><g clip-path="url(#pc2)"><rect width="100" height="110" fill="url(#pg2)"/><path d="M-5 80c10-14 30-20 55-20s45 6 55 20v35H-5z" fill="#16181E"/><path d="M20 62l30 48 30-48-15-6-15 10-15-10z" fill="#A6C8EA"/><path d="M40 58h20l-10 12z" fill="#F0F0F0"/><path d="M47 62h6l-3 6z" fill="#222"/><path d="M-2 86h22v8H-2zM80 86h22v8H80z" fill="#A6C8EA"/><circle cx="50" cy="96" r="3.5" fill="#6A7A8A"/><ellipse cx="50" cy="40" rx="13" ry="16" fill="#D5B49C"/><path d="M30 26c2-12 12-18 22-18s20 5 20 14l-6 6H34z" fill="#121212"/><path d="M33 30l-3 22" stroke="#9FC4E6" stroke-width="2"/></g></svg>
<svg style="left:132.9px;top:525.7px" width="47.6" height="52.0" viewBox="0 0 100 110" preserveAspectRatio="none"><defs><clipPath id="pc3"><path d="M14 0h86v90a20 20 0 0 1-20 20H0V14A14 14 0 0 1 14 0z"/></clipPath><linearGradient id="pg3" x1="0" x2="1"><stop offset="0" stop-color="#5E6250"/><stop offset="0.45" stop-color="#2E322C"/><stop offset="1" stop-color="#20231F"/></linearGradient></defs><g clip-path="url(#pc3)"><rect width="100" height="110" fill="url(#pg3)"/><path d="M8 112c2-28 14-40 42-44 28 4 40 16 42 44z" fill="#1E2433"/><path d="M40 70l10 22 10-22z" fill="#141414"/><path d="M30 52c-4-22 6-36 20-36s26 12 22 36c-2 8-8 12-22 12s-18-4-20-12z" fill="#121212"/><ellipse cx="51" cy="50" rx="12" ry="14" fill="#D2A88E"/><path d="M38 40c4-10 22-12 26 0-6-4-20-4-26 0z" fill="#121212"/></g></svg>
<svg style="left:200.6px;top:524.7px" width="45.1" height="51.8" viewBox="0 0 100 110" preserveAspectRatio="none"><defs><clipPath id="pc4"><path d="M14 0h86v90a20 20 0 0 1-20 20H0V14A14 14 0 0 1 14 0z"/></clipPath><radialGradient id="pg4" cx="0.5" cy="0.4" r="0.75"><stop offset="0" stop-color="#8C8F96"/><stop offset="1" stop-color="#5F6269"/></radialGradient></defs><g clip-path="url(#pc4)"><rect width="100" height="110" fill="url(#pg4)"/><path d="M0 112c0-26 12-36 50-40 38 4 50 14 50 40z" fill="#22252B"/><path d="M43 72h14l-4 40h-6z" fill="#F4F4F4"/><path d="M48 76h4l1 34h-6z" fill="#2A2D33"/><ellipse cx="50" cy="42" rx="15" ry="21" fill="#C99A7E"/><path d="M34 36c0-18 32-20 32 0-4-8-26-8-32 0z" fill="#2A2320"/></g></svg>
<div class="a" style="left:52px;top:593.5px;width:64px;height:1px;background:#C4C4C4"></div>
<div class="a" style="left:75px;top:598px;width:18px;height:1px;background:#D0D0D0"></div>
<div class="a" style="left:128px;top:593.5px;width:58px;height:1px;background:#C4C4C4"></div>
<div class="a" style="left:148px;top:598px;width:18px;height:1px;background:#D0D0D0"></div>
<div class="a" style="left:199px;top:593.5px;width:59px;height:1px;background:#C4C4C4"></div>
<div class="a" style="left:219px;top:598px;width:18px;height:1px;background:#D0D0D0"></div>
<svg style="left:14px;top:601px" width="50" height="24" viewBox="0 0 50 24"><path d="M13 0h33l-6 7c3 3 5 8 5 17H0c1-10 6-18 13-24z" fill="#B9BEC4" opacity="0.9"/><path d="M26 0h20l-8 9-1 10H25z" fill="#8E9BEA" opacity="0.9"/><path d="M20 9h18v10H20z" fill="#7D86C8" opacity="0.7"/><rect x="1" y="16" width="20" height="7" fill="#F0B894" opacity="0.85"/><rect x="21" y="16" width="19" height="7" fill="#B8A8F0" opacity="0.85"/><path d="M26 16v7M31 16v7M36 16v7" stroke="#6A4AA8" stroke-width="1.6"/><path d="M0 23h48" stroke="#A0A0A0" stroke-width="0.8"/></svg>
<div class="a" style="left:12px;top:651px;width:269px;height:152px;border:1px solid #C9C9C9;background:linear-gradient(to bottom,#fff 0%,#fff 80%,#F4F4F4 85%,#EAEAEA 91%,#DEDEDE 97%,#D8D8D8 100%);overflow:hidden">
<svg style="left:0;top:0" width="268" height="152" viewBox="507 314 1563.0 886.5" preserveAspectRatio="none"><defs>
<linearGradient id="gbt3" x1="0" x2="1" y1="0" y2="0"><stop offset="0" stop-color="#2D95DA"/><stop offset="0.4" stop-color="#2886CB"/><stop offset="1" stop-color="#1E5A89"/></linearGradient>
<linearGradient id="got3" x1="0" x2="1" y1="0" y2="0"><stop offset="0" stop-color="#F47200"/><stop offset="0.5" stop-color="#F57200"/><stop offset="1" stop-color="#C55811"/></linearGradient>
</defs>
<polygon points="520,416 667,496 667,980 520,892" fill="url(#gbt3)"/>
<polygon points="557,544 717,625 717,1052 557,976" fill="url(#got3)"/></svg>
</div>
<div class="a" style="left:54.9px;top:685.2px;width:210.3px;font-size:8.60px;line-height:9.68px;color:#2A2A2A;font-weight:normal;transform-origin:0 0;transform:scaleX(1.0000)">
<div style="white-space:nowrap;text-align:justify;text-align-last:justify;">The Laguna State Polytechnic University has</div>
<div style="white-space:nowrap;text-align:justify;text-align-last:justify;">implemented the Flexible Teaching and Learning</div>
<div style="white-space:nowrap;text-align:justify;text-align-last:justify;">Model. This Flexible Teaching and Learning Model is</div>
<div style="white-space:nowrap;text-align:justify;text-align-last:justify;">being operationalized in LSPU context with its desire</div>
<div style="white-space:nowrap;text-align:justify;text-align-last:justify;">to serve its purpose of providing quality and</div>
<div style="white-space:nowrap;text-align:justify;text-align-last:justify;">equitable education amidst the challenging time.</div>
<div style="white-space:nowrap;text-align:justify;text-align-last:justify;">Furthermore, the students' experience and</div>
<div style="white-space:nowrap;text-align:justify;text-align-last:justify;">perspectives are equally as important since they are</div>
<div style="white-space:nowrap;text-align:justify;text-align-last:justify;">the ones experiencing the sudden changes of</div>
<div style="white-space:nowrap;text-align:left;text-align-last:left;">learning environment (Hijazi, 2020).</div>
</div>
<div class="a" style="left:10px;top:828px;width:275px;height:159px;border:3.5px solid #E0704A;background:#F6D3C5"></div>
<div class="a" style="left:13px;top:831px;width:269px;height:152px;border:1px solid #C9C9C9;background:linear-gradient(to bottom,#fff 0%,#fff 80%,#F4F4F4 85%,#EAEAEA 91%,#DEDEDE 97%,#D8D8D8 100%);overflow:hidden">
<svg style="left:0;top:0" width="268" height="152" viewBox="507 314 1563.0 886.5" preserveAspectRatio="none"><defs>
<linearGradient id="gbt4" x1="0" x2="1" y1="0" y2="0"><stop offset="0" stop-color="#2D95DA"/><stop offset="0.4" stop-color="#2886CB"/><stop offset="1" stop-color="#1E5A89"/></linearGradient>
<linearGradient id="got4" x1="0" x2="1" y1="0" y2="0"><stop offset="0" stop-color="#F47200"/><stop offset="0.5" stop-color="#F57200"/><stop offset="1" stop-color="#C55811"/></linearGradient>
</defs>
<polygon points="520,416 667,496 667,980 520,892" fill="url(#gbt4)"/>
<polygon points="557,544 717,625 717,1052 557,976" fill="url(#got4)"/></svg>
</div>
<div class="a" style="left:56.7px;top:860.9px;width:210.6px;font-size:8.40px;line-height:9.63px;color:#2A2A2A;font-weight:normal;transform-origin:0 0;transform:scaleX(1.0000)">
<div style="white-space:nowrap;text-align:justify;text-align-last:justify;padding-left:1.5px;">In this study, the researcher prioritized how</div>
<div style="white-space:nowrap;text-align:justify;text-align-last:justify;">transformational instructional practices, the</div>
<div style="white-space:nowrap;text-align:justify;text-align-last:justify;">instructor's philosophical orientation, an</div>
<div style="white-space:nowrap;text-align:justify;text-align-last:justify;">implementation of FL influence students' university</div>
<div style="white-space:nowrap;text-align:justify;text-align-last:justify;">experiences. Universities and stakeholders care</div>
<div style="white-space:nowrap;text-align:justify;text-align-last:justify;">about student satisfaction and experience. A</div>
<div style="white-space:nowrap;text-align:justify;text-align-last:justify;">university's moral purpose is to provide high-quality</div>
<div style="white-space:nowrap;text-align:justify;text-align-last:justify;">education and research to meet society's needs.</div>
<div style="white-space:nowrap;text-align:justify;text-align-last:justify;">Because students are the most important customers</div>
<div style="white-space:nowrap;text-align:justify;text-align-last:justify;">of universities, their experiences, knowledge, and</div>
<div style="white-space:nowrap;text-align:justify;text-align-last:justify;">understanding of higher education must be based on</div>
<div style="white-space:nowrap;text-align:left;text-align-last:left;">their voices.</div>
</div>
<svg style="left:135px;top:877px" width="18" height="26" viewBox="0 0 18 26"><path d="M1 1v20l5-5 4 8 3-1.5-4-8h7z" fill="#fff" stroke="#222" stroke-width="1.1"/></svg>
<div class="a" style="left:12px;top:1009px;width:269px;height:152px;border:1px solid #C9C9C9;background:linear-gradient(to bottom,#fff 0%,#fff 80%,#F4F4F4 85%,#EAEAEA 91%,#DEDEDE 97%,#D8D8D8 100%);overflow:hidden">
<svg style="left:0;top:0" width="268" height="152" viewBox="507 314 1563.0 886.5" preserveAspectRatio="none"><defs>
<linearGradient id="gbt5" x1="0" x2="1" y1="0" y2="0"><stop offset="0" stop-color="#2D95DA"/><stop offset="0.4" stop-color="#2886CB"/><stop offset="1" stop-color="#1E5A89"/></linearGradient>
<linearGradient id="got5" x1="0" x2="1" y1="0" y2="0"><stop offset="0" stop-color="#F47200"/><stop offset="0.5" stop-color="#F57200"/><stop offset="1" stop-color="#C55811"/></linearGradient>
</defs>
<polygon points="520,416 667,496 667,980 520,892" fill="url(#gbt5)"/>
<polygon points="557,544 717,625 717,1052 557,976" fill="url(#got5)"/></svg>
</div>
<svg style="left:50px;top:1040px" width="210" height="105" viewBox="50 1040 210 105">
<ellipse cx="73" cy="1056.4" rx="13" ry="11.5" fill="#1F5F8B"/><rect x="66" y="1050" width="12" height="13" fill="none" stroke="#CFE0EC" stroke-width="1.2"/><rect x="68" y="1053" width="3.5" height="8" fill="#9FC0DA"/><rect x="73" y="1053" width="3.5" height="8" fill="#9FC0DA"/><circle cx="78.5" cy="1049" r="3" fill="none" stroke="#fff" stroke-width="1"/><path d="M80.5 1051l3 3" stroke="#fff" stroke-width="1"/>
<g fill="none" stroke="#222" stroke-width="1.1"><path d="M142 1069l2.5-16.3 4.7-6.2 5.1-1 6.2 3 2.1 6.2v9.3l-5.2 1.5-8.2 2.6z"/></g><g fill="#fff" stroke="#222" stroke-width="1"><path d="M149.2 1057l-2-3a2 2 0 1 1 4 0z"/><path d="M154.8 1051.3l-2-3a2 2 0 1 1 4 0z"/><path d="M155.4 1063.7l-2-3a2 2 0 1 1 4 0z"/></g>
<circle cx="220.6" cy="1055" r="12" fill="#E0505C"/><circle cx="220.6" cy="1055" r="9.3" fill="#fff"/><path d="M220.6 1055h5v-5z" fill="#C8CCE8"/><path d="M220.6 1047.5v7.5h6" stroke="#333" stroke-width="1.3" fill="none"/>
<circle cx="97.8" cy="1115" r="13" fill="#1D4F6E"/><rect x="88" y="1106" width="9" height="8" fill="#2E8A3E"/><rect x="98" y="1106" width="9" height="8" fill="#F4F4F4"/><rect x="88" y="1115" width="9" height="8" fill="#F4F4F4"/><rect x="98" y="1115" width="9" height="8" fill="#2E8A3E"/><circle cx="92.5" cy="1109" r="1.8" fill="#E9A66B"/><circle cx="102.5" cy="1109" r="1.8" fill="#E9A66B"/><circle cx="92.5" cy="1118" r="1.8" fill="#E9A66B"/><circle cx="102.5" cy="1118" r="1.8" fill="#E9A66B"/><path d="M90 1114h5M100 1114h5M90 1123h5M100 1123h5" stroke="#C0392B" stroke-width="2"/>
<rect x="153.3" y="1102" width="11" height="9" fill="#EBD3A8" stroke="#444" stroke-width="0.7"/><circle cx="158.8" cy="1105" r="2" fill="#7A4A2A"/><rect x="165.7" y="1107" width="11" height="8.5" fill="#EBD3A8" stroke="#444" stroke-width="0.7"/><circle cx="171.2" cy="1110" r="2" fill="#7A4A2A"/><rect x="168.2" y="1119" width="9.3" height="5.8" fill="#8FA060" stroke="#333" stroke-width="0.7"/><path d="M159 1119.5l-4.7 4.2" stroke="#333" stroke-width="1.8"/><circle cx="163.1" cy="1115.5" r="5" fill="#4A9CE0" stroke="#333" stroke-width="1.2"/><circle cx="163.1" cy="1115.5" r="2.5" fill="#BFE0F8"/>
<circle cx="234.5" cy="1114" r="13" fill="#3B2C8A"/><circle cx="234.5" cy="1114" r="10.5" fill="#5A3FA8"/><rect x="226" y="1107" width="17" height="13" fill="#CFE3F5"/><rect x="228" y="1112" width="3" height="6" fill="#7FA6D0"/><rect x="232" y="1109" width="3" height="9" fill="#9FC0E0"/><rect x="237" y="1111" width="4" height="4" fill="#E9F2FA"/><circle cx="240" cy="1120" r="2" fill="#2A2050"/>
</svg>
<svg style="left:205px;top:1040px" width="32" height="32" viewBox="205 1040 32 32"><g fill="#555"><circle cx="227.4" cy="1055.0" r="0.6"/><circle cx="226.5" cy="1058.4" r="0.6"/><circle cx="224.0" cy="1060.9" r="0.6"/><circle cx="220.6" cy="1061.8" r="0.6"/><circle cx="217.2" cy="1060.9" r="0.6"/><circle cx="214.7" cy="1058.4" r="0.6"/><circle cx="213.8" cy="1055.0" r="0.6"/><circle cx="214.7" cy="1051.6" r="0.6"/><circle cx="217.2" cy="1049.1" r="0.6"/><circle cx="220.6" cy="1048.2" r="0.6"/><circle cx="224.0" cy="1049.1" r="0.6"/><circle cx="226.5" cy="1051.6" r="0.6"/></g></svg>
<div class="a" style="left:12px;top:1188px;width:269px;height:77px;border:1px solid #C9C9C9;border-bottom:none;background:#fff;overflow:hidden">
<svg style="left:0;top:0" width="268" height="152" viewBox="507 314 1563 886.5" preserveAspectRatio="none"><defs>
<linearGradient id="gbt6" x1="0" x2="1" y1="0" y2="0"><stop offset="0" stop-color="#2D95DA"/><stop offset="0.4" stop-color="#2886CB"/><stop offset="1" stop-color="#1E5A89"/></linearGradient>
<linearGradient id="got6" x1="0" x2="1" y1="0" y2="0"><stop offset="0" stop-color="#F47200"/><stop offset="0.5" stop-color="#F57200"/><stop offset="1" stop-color="#C55811"/></linearGradient>
</defs>
<polygon points="520,416 667,496 667,980 520,892" fill="url(#gbt6)"/>
<polygon points="557,544 717,625 717,1052 557,976" fill="url(#got6)"/></svg>
</div>
<div class="a" style="left:159.3px;top:1214.1px;width:117.4px;font-size:7.60px;line-height:8.15px;color:#444;font-weight:normal;transform-origin:0 0;transform:scaleX(0.9106)">
<div style="white-space:nowrap;text-align:justify;text-align-last:justify;">Table 1 presents the respondents'</div>
<div style="white-space:nowrap;text-align:justify;text-align-last:justify;">recurrent answers regarding</div>
<div style="white-space:nowrap;text-align:justify;text-align-last:justify;">Transformational Instruction</div>
<div style="white-space:nowrap;text-align:justify;text-align-last:justify;">Practices and Flexible Learning</div>
<div style="white-space:nowrap;text-align:justify;text-align-last:justify;">Implementation to the Level of</div>
<div style="white-space:nowrap;text-align:left;text-align-last:left;">Students' University Experience.</div>
</div>
<svg style="left:50px;top:1212px" width="110" height="53" viewBox="50 1212 110 53"><g fill="#666"><rect x="55" y="1216" width="18" height="0.9" opacity="0.55"/><rect x="55" y="1219" width="18" height="0.9" opacity="0.55"/><rect x="55" y="1222" width="18" height="0.9" opacity="0.55"/><rect x="80" y="1216" width="14" height="0.9" opacity="0.55"/><rect x="80" y="1219" width="14" height="0.9" opacity="0.55"/><rect x="80" y="1222" width="14" height="0.9" opacity="0.55"/><rect x="80" y="1225" width="14" height="0.9" opacity="0.55"/><rect x="80" y="1228" width="14" height="0.9" opacity="0.55"/><rect x="55" y="1252" width="18" height="0.9" opacity="0.55"/><rect x="55" y="1255" width="18" height="0.9" opacity="0.55"/><rect x="55" y="1258" width="18" height="0.9" opacity="0.55"/><rect x="80" y="1252" width="14" height="0.9" opacity="0.55"/><rect x="80" y="1255" width="14" height="0.9" opacity="0.55"/><rect x="80" y="1258" width="14" height="0.9" opacity="0.55"/><rect x="113" y="1215" width="24" height="1.2" opacity="0.8"/><rect x="104" y="1218" width="44" height="0.8" opacity="0.35"/><rect x="104" y="1220" width="44" height="0.8" opacity="0.60"/><rect x="104" y="1222" width="44" height="0.8" opacity="0.35"/><rect x="104" y="1224" width="44" height="0.8" opacity="0.60"/><rect x="104" y="1226" width="44" height="0.8" opacity="0.35"/><rect x="104" y="1228" width="44" height="0.8" opacity="0.60"/><rect x="104" y="1230" width="44" height="0.8" opacity="0.35"/><rect x="104" y="1232" width="44" height="0.8" opacity="0.60"/><rect x="104" y="1234" width="44" height="0.8" opacity="0.35"/><rect x="104" y="1236" width="44" height="0.8" opacity="0.60"/><rect x="104" y="1238" width="44" height="0.8" opacity="0.35"/><rect x="104" y="1240" width="44" height="0.8" opacity="0.60"/><rect x="104" y="1242" width="44" height="0.8" opacity="0.35"/><rect x="104" y="1244" width="44" height="0.8" opacity="0.60"/><rect x="104" y="1246" width="44" height="0.8" opacity="0.35"/><rect x="104" y="1248" width="44" height="0.8" opacity="0.60"/><rect x="104" y="1250" width="44" height="0.8" opacity="0.35"/><rect x="104" y="1252" width="44" height="0.8" opacity="0.60"/><rect x="104" y="1254" width="44" height="0.8" opacity="0.35"/><rect x="104" y="1256" width="44" height="0.8" opacity="0.60"/><rect x="104" y="1258" width="44" height="0.8" opacity="0.35"/><rect x="104" y="1260" width="44" height="0.8" opacity="0.60"/><rect x="104" y="1262" width="44" height="0.8" opacity="0.35"/><rect x="104" y="1264" width="44" height="0.8" opacity="0.60"/></g></svg>
<div class="a" style="left:2022px;top:78px;width:211px;height:118px;background:#1E1E1E"></div>
<div class="a" style="left:2067px;top:78px;width:119px;height:118px;background:#000"></div>
<svg style="left:2060px;top:76px" width="140" height="124" viewBox="2060 76 140 124">
<ellipse cx="2124.9" cy="132.3" rx="56.9" ry="53.6" fill="#FB870C"/>
<path d="M2080 171 C2088 182 2104 193 2122 194 C2142 195 2162 186 2172 176 C2178 169 2181 162 2182.5 156 L2186 152 L2175 137 L2154 154 L2165 155.8 C2160 166 2146 180 2124 183.5 C2104 186 2088 178 2080 171 Z" fill="#1024D0"/>
<path d="M2096.5 125.8 L2110.5 125.2 L2104 177 C2103 183 2106 184.5 2111 184 C2124 182 2134 173 2142 163 L2140.5 161 C2132 169 2124 173 2119.5 173 L2131 113 L2119 115.5 C2108 118 2100 121 2096.5 125.8 Z" fill="#FFFCF4"/>
<path d="M2116.5 102 L2121 94.5 C2128 89 2135 85.5 2140.5 83 L2135.5 93 C2129 97 2122 100 2116.5 102 Z" fill="#FFFCF4"/>
</svg>
<div class="t" style="left:811.8px;top:92.1px;font-size:15.60px;color:#FCE8DC;-webkit-text-stroke:0.25px #FCE8DC;">Copy of ICMIAR 2023Presentation Template - PowerPoint (Product Activation Failed)</div>
<div class="t" style="left:4.7px;top:129.1px;font-size:15.80px;color:#FCE8DC;transform:scaleX(0.8957);-webkit-text-stroke:0.25px #FCE8DC;">File</div>
<div class="t" style="left:140.2px;top:129.1px;font-size:15.80px;color:#FCE8DC;transform:scaleX(0.9770);-webkit-text-stroke:0.25px #FCE8DC;">Insert</div>
<div class="t" style="left:204.6px;top:129.1px;font-size:15.80px;color:#FCE8DC;transform:scaleX(0.9762);-webkit-text-stroke:0.25px #FCE8DC;">Design</div>
<div class="t" style="left:278.8px;top:129.1px;font-size:15.80px;color:#FCE8DC;transform:scaleX(0.9417);-webkit-text-stroke:0.25px #FCE8DC;">Transitions</div>
<div class="t" style="left:377.3px;top:129.1px;font-size:15.80px;color:#FCE8DC;-webkit-text-stroke:0.25px #FCE8DC;">Animations</div>
<div class="t" style="left:482.0px;top:129.1px;font-size:15.80px;color:#FCE8DC;transform:scaleX(0.9730);-webkit-text-stroke:0.25px #FCE8DC;">Slide Show</div>
<div class="t" style="left:584.5px;top:129.1px;font-size:15.80px;color:#FCE8DC;transform:scaleX(0.9113);-webkit-text-stroke:0.25px #FCE8DC;">Review</div>
<div class="t" style="left:657.0px;top:129.1px;font-size:15.80px;color:#FCE8DC;transform:scaleX(0.9719);-webkit-text-stroke:0.25px #FCE8DC;">View</div>
<div class="t" style="left:738.2px;top:129.1px;font-size:15.80px;color:#FCE8DC;transform:scaleX(1.0048);-webkit-text-stroke:0.25px #FCE8DC;">Tell me what you want to do...</div>
<div class="t" style="left:72.0px;top:129.1px;font-size:15.80px;color:#B9502C;transform:scaleX(1.0062);">Home</div>
<div class="t" style="left:33.0px;top:251.9px;font-size:13.00px;color:#5A5A5A;transform:scaleX(1.0657);">Clipboard</div>
<div class="t" style="left:228.8px;top:251.9px;font-size:13.00px;color:#5A5A5A;transform:scaleX(0.9885);">Slides</div>
<div class="t" style="left:431.6px;top:251.9px;font-size:13.00px;color:#5A5A5A;transform:scaleX(1.0380);">Font</div>
<div class="t" style="left:734.6px;top:251.9px;font-size:13.00px;color:#5A5A5A;transform:scaleX(1.0196);">Paragraph</div>
<div class="t" style="left:1151.3px;top:251.9px;font-size:13.00px;color:#5A5A5A;transform:scaleX(1.0821);">Drawing</div>
<div class="t" style="left:1442.0px;top:251.9px;font-size:13.00px;color:#5A5A5A;transform:scaleX(1.0491);">Editing</div>
<div class="t" style="left:-10.6px;top:206.1px;font-size:14.70px;color:#454545;transform:scaleX(0.9212);">Paste</div>
<div class="t" style="left:58.5px;top:163.7px;font-size:14.70px;color:#454545;transform:scaleX(1.0282);">Cut</div>
<div class="t" style="left:58.5px;top:193.3px;font-size:14.70px;color:#454545;transform:scaleX(1.0499);">Copy</div>
<div class="t" style="left:58.5px;top:222.4px;font-size:14.70px;color:#454545;transform:scaleX(1.0429);">Format Painter</div>
<div class="t" style="left:184.0px;top:205.6px;font-size:14.70px;color:#454545;transform:scaleX(1.0142);">New</div>
<div class="t" style="left:177.8px;top:227.0px;font-size:14.70px;color:#454545;transform:scaleX(1.0043);">Slide</div>
<div class="t" style="left:251.7px;top:164.2px;font-size:14.70px;color:#454545;transform:scaleX(1.0454);">Layout</div>
<div class="t" style="left:251.7px;top:193.5px;font-size:14.70px;color:#454545;transform:scaleX(0.9435);">Reset</div>
<div class="t" style="left:251.7px;top:222.1px;font-size:14.70px;color:#454545;transform:scaleX(1.0227);">Section</div>
<div class="t" style="left:441.6px;top:173.4px;font-size:15.30px;color:#8E8E8E;transform:scaleX(0.8346);">14</div>
<div class="t" style="left:499.0px;top:171.4px;font-size:19.00px;color:#A6A6A6;transform:scaleX(1.0258);">A</div>
<div class="t" style="left:526.0px;top:175.3px;font-size:15.00px;color:#A6A6A6;transform:scaleX(1.0995);">A</div>
<div class="t" style="left:334.4px;top:210.6px;font-size:16.50px;color:#A6A6A6;font-weight:bold;transform:scaleX(0.9567);">B</div>
<div class="t" style="left:361.0px;top:210.6px;font-size:16.50px;color:#A6A6A6;transform:scaleX(1.7451);font-style:italic;">I</div>
<div class="t" style="left:386.0px;top:210.6px;font-size:16.50px;color:#A6A6A6;transform:scaleX(1.0071);">U</div>
<div class="t" style="left:413.0px;top:210.6px;font-size:16.50px;color:#A6A6A6;font-weight:bold;text-shadow:1px 1px 1px #ccc;">S</div>
<div class="t" style="left:435.0px;top:213.6px;font-size:13.00px;color:#A6A6A6;transform:scaleX(1.0258);">abc</div>
<div class="t" style="left:463.0px;top:206.3px;font-size:12.00px;color:#A6A6A6;transform:scaleX(1.2568);">AV</div>
<div class="t" style="left:500.0px;top:210.6px;font-size:16.50px;color:#A6A6A6;transform:scaleX(1.0405);">Aa</div>
<div class="t" style="left:550.0px;top:209.8px;font-size:17.50px;color:#A6A6A6;transform:scaleX(1.1137);">A</div>
<div class="t" style="left:803.5px;top:164.6px;font-size:14.70px;color:#A8A8A8;transform:scaleX(1.0397);">Text Direction</div>
<div class="t" style="left:803.0px;top:193.6px;font-size:14.70px;color:#A8A8A8;transform:scaleX(1.0522);">Align Text</div>
<div class="t" style="left:803.0px;top:222.3px;font-size:14.70px;color:#A8A8A8;transform:scaleX(1.0865);">Convert to SmartArt</div>
<div class="t" style="left:1153.5px;top:206.4px;font-size:14.70px;color:#454545;transform:scaleX(1.0698);">Arrange</div>
<div class="t" style="left:1219.0px;top:206.4px;font-size:14.70px;color:#A8A8A8;transform:scaleX(1.0388);">Quick</div>
<div class="t" style="left:1214.0px;top:226.6px;font-size:14.70px;color:#A8A8A8;transform:scaleX(0.9501);">Styles</div>
<div class="t" style="left:1293.0px;top:163.6px;font-size:14.70px;color:#A8A8A8;">Shape Fill</div>
<div class="t" style="left:1293.0px;top:191.2px;font-size:14.70px;color:#A8A8A8;transform:scaleX(1.0485);">Shape Outline</div>
<div class="t" style="left:1293.0px;top:218.4px;font-size:14.70px;color:#A8A8A8;transform:scaleX(1.0090);">Shape Effects</div>
<div class="t" style="left:1439.8px;top:162.5px;font-size:14.70px;color:#454545;transform:scaleX(1.0115);">Find</div>
<div class="t" style="left:1440.0px;top:191.2px;font-size:14.70px;color:#454545;transform:scaleX(0.9835);">Replace</div>
<div class="t" style="left:1440.0px;top:218.4px;font-size:14.70px;color:#454545;transform:scaleX(0.9799);">Select</div>
<div class="t" style="left:347.2px;top:1220.6px;font-size:18.70px;color:#5A5A5A;transform:scaleX(1.0334);">Click to add notes</div>
<div class="t" style="left:-1.0px;top:1273.4px;font-size:13.00px;color:#555;transform:scaleX(1.0657);">de 4 of 11</div>
<div class="t" style="left:112.9px;top:1273.4px;font-size:13.00px;color:#555;transform:scaleX(1.0367);">English (Philippines)</div>
<div class="t" style="left:1664.2px;top:1273.8px;font-size:13.00px;color:#555;transform:scaleX(1.0247);">Notes</div>
<div class="t" style="left:1740.2px;top:1273.8px;font-size:13.00px;color:#555;transform:scaleX(1.0565);">Comments</div>
<div class="t" style="left:2168.6px;top:1273.8px;font-size:13.00px;color:#555;transform:scaleX(1.0339);">93%</div>
<div class="t" style="left:-5.6px;top:471.4px;font-size:17.00px;color:#3A3A3A;">2</div>
<div class="t" style="left:-5.6px;top:649.5px;font-size:17.00px;color:#3A3A3A;">3</div>
<div class="t" style="left:-5.6px;top:829.1px;font-size:17.00px;color:#C5532B;">4</div>
<div class="t" style="left:-5.6px;top:1007.4px;font-size:17.00px;color:#3A3A3A;">5</div>
<div class="t" style="left:-5.6px;top:1186.6px;font-size:17.00px;color:#3A3A3A;">6</div>
<div class="t" style="left:95.9px;top:302.3px;font-size:11.80px;color:#111;font-weight:bold;transform:scaleX(1.0240);">RESEARCH TITLE</div>
<div class="t" style="left:86.5px;top:330.3px;font-size:9.00px;color:#1A1A1A;font-weight:bold;transform:scaleX(1.0929);">PHILOSOPHICAL</div>
<div class="t" style="left:91.5px;top:341.1px;font-size:9.00px;color:#1A1A1A;font-weight:bold;transform:scaleX(1.1217);">ORIENTATION,</div>
<div class="t" style="left:73.3px;top:352.0px;font-size:9.00px;color:#1A1A1A;font-weight:bold;transform:scaleX(1.1008);">TRANSFORMATIONAL</div>
<div class="t" style="left:60.8px;top:362.7px;font-size:9.00px;color:#1A1A1A;font-weight:bold;transform:scaleX(1.1057);">INSTRUCTION PRACTICES,</div>
<div class="t" style="left:73.9px;top:373.9px;font-size:9.00px;color:#1A1A1A;font-weight:bold;transform:scaleX(1.1127);">IMPLEMENTATION OF</div>
<div class="t" style="left:63.3px;top:384.6px;font-size:9.00px;color:#1A1A1A;font-weight:bold;transform:scaleX(1.1013);">FLEXIBLE LEARNING AND</div>
<div class="t" style="left:87.7px;top:397.1px;font-size:9.00px;color:#1A1A1A;font-weight:bold;transform:scaleX(1.1016);">THE STUDENTS'</div>
<div class="t" style="left:63.9px;top:407.8px;font-size:9.00px;color:#1A1A1A;font-weight:bold;transform:scaleX(1.0949);">UNIVERSITY EXPERIENCE</div>
<div class="t" style="left:237.0px;top:422.2px;font-size:4.50px;color:#333;font-weight:bold;transform:scaleX(1.0115);">Presenter</div>
<div class="t" style="left:220.0px;top:426.3px;font-size:5.00px;color:#222;font-weight:bold;transform:scaleX(0.8487);">JHERWIN P. HERMOSA</div>
<div class="t" style="left:122.9px;top:496.1px;font-size:10.00px;color:#111;font-weight:bold;transform:scaleX(0.9890);">AUTHORS</div>
<div class="t" style="left:52.6px;top:586.2px;font-size:6.30px;color:#1A1A1A;font-weight:bold;transform:scaleX(0.8990);">JHERWIN P. HERMOSA</div>
<div class="t" style="left:129.1px;top:586.2px;font-size:6.30px;color:#1A1A1A;font-weight:bold;transform:scaleX(0.8668);">EDEN C. CALLO, EdD</div>
<div class="t" style="left:195.6px;top:585.7px;font-size:6.30px;color:#1A1A1A;font-weight:bold;transform:scaleX(0.7953);">EDILBERTO Z. ANDAL, EdD</div>
<div class="t" style="left:102.8px;top:662.1px;font-size:11.30px;color:#111;font-weight:bold;transform:scaleX(1.0681);">INTRODUCTION</div>
<div class="t" style="left:117.3px;top:844.0px;font-size:11.00px;color:#111;font-weight:bold;transform:scaleX(1.1192);">RATIONALE</div>
<div class="t" style="left:94.7px;top:1019.5px;font-size:11.50px;color:#111;font-weight:bold;transform:scaleX(1.0585);">METHODOLOGY</div>
<div class="t" style="left:68.0px;top:1073.9px;font-size:4.30px;color:#D85050;font-weight:bold;transform:scaleX(0.8604);opacity:0.8;">Research Design</div>
<div class="t" style="left:69.5px;top:1078.4px;font-size:4.30px;color:#222;font-weight:bold;transform:scaleX(0.8566);opacity:0.8;">Transcendental</div>
<div class="t" style="left:60.5px;top:1082.9px;font-size:4.30px;color:#222;font-weight:bold;transform:scaleX(0.8452);opacity:0.8;">Phenomenological design</div>
<div class="t" style="left:136.0px;top:1073.4px;font-size:4.30px;color:#D85050;font-weight:bold;transform:scaleX(0.8784);opacity:0.8;">Research Locale</div>
<div class="t" style="left:129.0px;top:1077.9px;font-size:4.30px;color:#222;font-weight:bold;transform:scaleX(0.8532);opacity:0.8;">LSPU San Pablo Campus</div>
<div class="t" style="left:214.5px;top:1073.4px;font-size:4.30px;color:#D85050;font-weight:bold;transform:scaleX(0.8492);opacity:0.8;">Duration</div>
<div class="t" style="left:201.0px;top:1077.9px;font-size:4.30px;color:#222;font-weight:bold;transform:scaleX(0.8414);opacity:0.8;">2nd Sem, A.Y. 2022-2023</div>
<div class="t" style="left:86.0px;top:1128.9px;font-size:4.30px;color:#D85050;font-weight:bold;transform:scaleX(0.8083);opacity:0.8;">Respondents</div>
<div class="t" style="left:78.5px;top:1133.4px;font-size:4.30px;color:#222;font-weight:bold;transform:scaleX(0.9567);opacity:0.8;">LSPU 4th Students</div>
<div class="t" style="left:146.5px;top:1127.4px;font-size:4.30px;color:#D85050;font-weight:bold;transform:scaleX(0.9063);opacity:0.8;">Sampling technique</div>
<div class="t" style="left:146.5px;top:1131.9px;font-size:4.30px;color:#222;font-weight:bold;transform:scaleX(0.8957);opacity:0.8;">Purposive Sampling</div>
<div class="t" style="left:221.5px;top:1127.4px;font-size:4.30px;color:#D85050;font-weight:bold;transform:scaleX(0.8871);opacity:0.8;">Data Analysis</div>
<div class="t" style="left:217.5px;top:1131.9px;font-size:4.30px;color:#222;font-weight:bold;transform:scaleX(0.8914);opacity:0.8;">Thematic analysis</div>
<div class="t" style="left:112.8px;top:1196.6px;font-size:11.30px;color:#111;font-weight:bold;transform:scaleX(1.0870);">RESULTS</div>
<div class="t" style="left:2025.8px;top:180.6px;font-size:10.50px;color:#EEE;transform:scaleX(0.9084);">IIARI</div>
</body></html>
